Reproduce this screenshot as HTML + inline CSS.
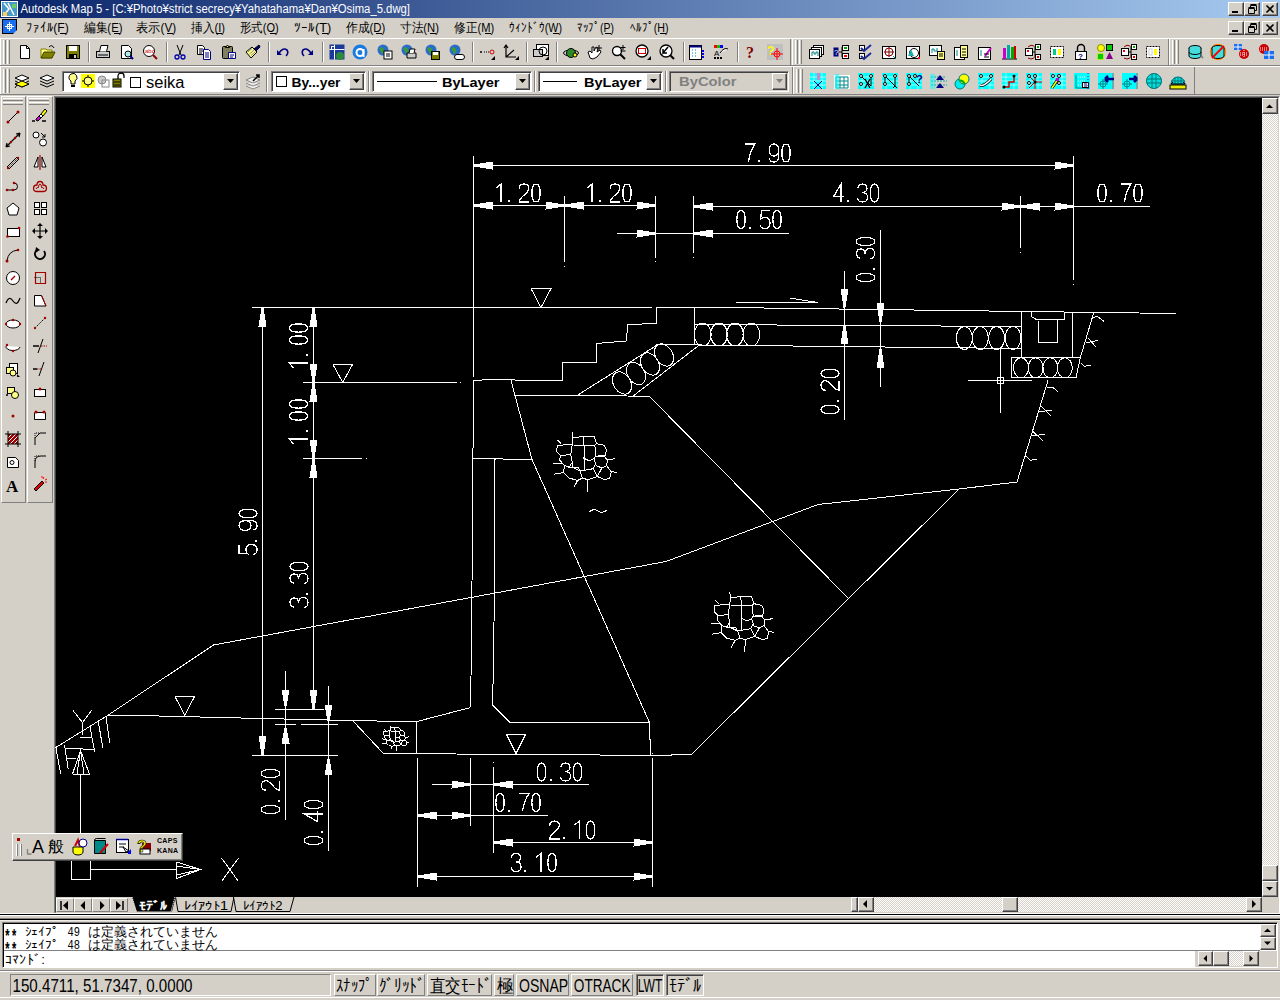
<!DOCTYPE html><html><head><meta charset="utf-8"><style>
*{box-sizing:border-box;margin:0;padding:0}
html,body{width:1280px;height:1000px;overflow:hidden;background:#D4D0C8;font-family:"Liberation Sans",sans-serif;font-size:12px;color:#000}
.a{position:absolute}
.btn{position:absolute;background:#D4D0C8;border-top:1px solid #fff;border-left:1px solid #fff;border-right:1px solid #404040;border-bottom:1px solid #404040;box-shadow:inset -1px -1px 0 #808080}
.m{position:absolute;top:19px;font-size:12px;white-space:nowrap;line-height:16px}
.tb{position:absolute;border-top:1px solid #fff;border-left:1px solid #fff;border-right:1px solid #808080;border-bottom:1px solid #808080}
.grip{position:absolute;width:3px;border-left:1px solid #fff;border-right:1px solid #808080;background:#D4D0C8}
.sep{position:absolute;width:2px;border-left:1px solid #808080;border-right:1px solid #fff}
.combo{position:absolute;height:21px;background:#fff;border-top:1px solid #808080;border-left:1px solid #808080;border-right:1px solid #fff;border-bottom:1px solid #fff;box-shadow:inset 1px 1px 0 #404040}
.hatch{background:repeating-conic-gradient(#fff 0 25%,#D4D0C8 0 50%) 0 0/2px 2px}
svg{position:absolute;overflow:visible}
</style></head><body>
<div class="a" style="left:0;top:0;width:1280px;height:18px;background:linear-gradient(to right,#0A246A,#A6CAF0)"></div>
<svg style="left:1px;top:1px" width="17" height="16"><rect x="0.5" y="0.5" width="16" height="15" fill="#4a9ac8" stroke="#fff"/><path d="M3 2 L8 8 L3 14 M7 2 L13 14" stroke="#fff" stroke-width="1.5" fill="none"/><rect x="11" y="3" width="4" height="4" fill="#6c6"/><rect x="2" y="11" width="4" height="4" fill="#fc6"/></svg>
<div class="btn" style="left:1228px;top:2px;width:16px;height:14px"></div>
<div class="a" style="left:1232px;top:11px;width:6px;height:2px;background:#000"></div>
<div class="btn" style="left:1244px;top:2px;width:16px;height:14px"></div>
<svg style="left:1247px;top:4px" width="10" height="10"><path d="M3.5 1.5h6v5h-2 M3.5 1.5v2 M1.5 4.5h6v5h-6z M1.5 3.5h6 M3.5 0.5h6" stroke="#000" fill="none"/></svg>
<div class="btn" style="left:1262px;top:2px;width:16px;height:14px"></div>
<svg style="left:1265px;top:4px" width="10" height="10"><path d="M1.5 1.5 L8.5 8.5 M8.5 1.5 L1.5 8.5" stroke="#000" stroke-width="1.6" fill="none"/></svg>
<svg style="left:2px;top:19px" width="17" height="17"><rect x="0.5" y="0.5" width="14" height="14" fill="#1a6ff0" stroke="#000"/><path d="M3 7.5h9 M7.5 3v9" stroke="#fff"/><rect x="5.5" y="5.5" width="4" height="4" fill="none" stroke="#fff"/><path d="M11 15 L15 11 L15 15z" fill="#ccc"/></svg>
<div class="a" style="left:59.75px;top:33px;width:6px;height:1px;background:#000"></div>
<div class="a" style="left:113.5px;top:33px;width:6px;height:1px;background:#000"></div>
<div class="a" style="left:167.25px;top:33px;width:6px;height:1px;background:#000"></div>
<div class="a" style="left:216px;top:33px;width:6px;height:1px;background:#000"></div>
<div class="a" style="left:269.75px;top:33px;width:6px;height:1px;background:#000"></div>
<div class="a" style="left:322.25px;top:33px;width:6px;height:1px;background:#000"></div>
<div class="a" style="left:376.2px;top:33px;width:6px;height:1px;background:#000"></div>
<div class="a" style="left:429.9px;top:33px;width:6px;height:1px;background:#000"></div>
<div class="a" style="left:485.25px;top:33px;width:6px;height:1px;background:#000"></div>
<div class="a" style="left:553px;top:33px;width:6px;height:1px;background:#000"></div>
<div class="a" style="left:605px;top:33px;width:6px;height:1px;background:#000"></div>
<div class="a" style="left:659.5px;top:33px;width:6px;height:1px;background:#000"></div>
<div class="btn" style="left:1228px;top:21px;width:16px;height:14px"></div>
<div class="a" style="left:1232px;top:30px;width:6px;height:2px;background:#000"></div>
<div class="btn" style="left:1244px;top:21px;width:16px;height:14px"></div>
<svg style="left:1247px;top:23px" width="10" height="10"><path d="M3.5 1.5h6v5h-2 M3.5 1.5v2 M1.5 4.5h6v5h-6z M1.5 3.5h6 M3.5 0.5h6" stroke="#000" fill="none"/></svg>
<div class="btn" style="left:1262px;top:21px;width:16px;height:14px"></div>
<svg style="left:1265px;top:23px" width="10" height="10"><path d="M1.5 1.5 L8.5 8.5 M8.5 1.5 L1.5 8.5" stroke="#000" stroke-width="1.6" fill="none"/></svg>
<div class="a" style="left:0;top:38px;width:1280px;height:1px;background:#fff"></div>
<div class="tb" style="left:0;top:39px;width:791px;height:26px;border-top:none;border-bottom:none"></div>
<div class="grip" style="left:3px;top:40px;height:24px"></div><div class="grip" style="left:7px;top:40px;height:24px"></div>
<svg style="left:17px;top:44px" width="16" height="16"><path d="M3.5 1.5h6l3 3v10h-9z" fill="#fff" stroke="#000"/><path d="M9.5 1.5v3h3" fill="none" stroke="#000"/></svg>
<svg style="left:40px;top:44px" width="16" height="16"><path d="M1 5h5l1 1h5v8H1z" fill="#ffff80" stroke="#808000"/><path d="M1 14 L4 8 H15 L12 14Z" fill="#808000" stroke="#404000"/><path d="M9 3 Q12 0 14 4" stroke="#000" fill="none"/></svg>
<svg style="left:65px;top:44px" width="16" height="16"><rect x="1.5" y="1.5" width="13" height="13" fill="#808000" stroke="#000"/><rect x="4" y="2" width="8" height="5" fill="#fff"/><rect x="4" y="10" width="8" height="4" fill="#000"/><rect x="9" y="11" width="2" height="3" fill="#ccc"/></svg>
<div class="sep" style="left:88px;top:42px;height:20px"></div>
<svg style="left:95px;top:44px" width="16" height="16"><rect x="1.5" y="7.5" width="13" height="6" fill="#ccc" stroke="#000"/><path d="M4.5 7.5 L6 1.5h7l-1.5 6" fill="#fff" stroke="#000"/><path d="M3 11h10" stroke="#000"/></svg>
<svg style="left:119px;top:44px" width="16" height="16"><path d="M2.5 1.5h7l3 3v10h-10z" fill="#fff" stroke="#000"/><circle cx="9" cy="10" r="3" fill="#aee" stroke="#000"/><path d="M11 12 L14 15" stroke="#008" stroke-width="2"/></svg>
<svg style="left:142px;top:44px" width="16" height="16"><circle cx="7" cy="7" r="5.5" fill="#fff" stroke="#000"/><text x="3" y="9" font-size="6" fill="#c00" font-family="Liberation Sans">abc</text><path d="M11 11 L15 15" stroke="#800" stroke-width="2"/></svg>
<div class="sep" style="left:166px;top:42px;height:20px"></div>
<svg style="left:172px;top:44px" width="16" height="16"><path d="M5 1 L9 11 M11 1 L7 11" stroke="#000"/><circle cx="5" cy="13" r="2" fill="none" stroke="#00a" stroke-width="1.3"/><circle cx="11" cy="13" r="2" fill="none" stroke="#00a" stroke-width="1.3"/></svg>
<svg style="left:196px;top:44px" width="16" height="16"><path d="M1.5 1.5h5l2 2v7h-7z" fill="#fff" stroke="#000"/><path d="M3 5h4M3 7h4M3 9h3" stroke="#000"/><path d="M7.5 5.5h5l2 2v8h-7z" fill="#fff" stroke="#000080"/><path d="M9 9h4M9 11h4M9 13h4" stroke="#000080"/></svg>
<svg style="left:221px;top:44px" width="16" height="16"><rect x="1.5" y="2.5" width="10" height="12" rx="1" fill="#808060" stroke="#000"/><path d="M4.5 3.5 L6.5 1 L8.5 3.5Z" fill="#ff0" stroke="#000"/><path d="M7.5 8.5h7v6h-7z" fill="#fff" stroke="#000080"/><path d="M9 11h4M9 13h3" stroke="#000080"/></svg>
<svg style="left:245px;top:44px" width="16" height="16"><path d="M1 8 L7 3 L12 8 L6 14Z" fill="#ff8" stroke="#000"/><path d="M3 8 L7 4.5 M4.5 10 L9 6 M6 11.5 L10.5 7.5" stroke="#888"/><path d="M9 5 L14 1 L15 3 L11 7" fill="#000080" stroke="#000"/></svg>
<div class="sep" style="left:268px;top:42px;height:20px"></div>
<svg style="left:275px;top:44px" width="16" height="16"><path d="M2 6 L2 11 L7 11Z" fill="#000080"/><path d="M4 9 Q8 3 12 6 Q14 9 11 12" fill="none" stroke="#000080" stroke-width="1.6"/></svg>
<svg style="left:299px;top:44px" width="16" height="16"><path d="M14 6 L14 11 L9 11Z" fill="#000080"/><path d="M12 9 Q8 3 4 6 Q2 9 5 12" fill="none" stroke="#000080" stroke-width="1.6"/></svg>
<div class="sep" style="left:322px;top:42px;height:20px"></div>
<svg style="left:329px;top:44px" width="16" height="16"><rect x="0.5" y="0.5" width="15" height="15" fill="#1a3a9a"/><path d="M5.5 0.5v15 M0.5 5.5h15" stroke="#fff"/><rect x="2.5" y="2.5" width="3" height="3" fill="none" stroke="#fff"/><circle cx="11" cy="12" r="4" fill="#2a8a3a"/></svg>
<svg style="left:352px;top:44px" width="16" height="16"><circle cx="8" cy="8" r="7.5" fill="#1a7ae0"/><circle cx="8" cy="8.5" r="3.5" fill="none" stroke="#fff" stroke-width="2"/><path d="M11.5 5v8" stroke="#fff" stroke-width="2"/></svg>
<svg style="left:377px;top:44px" width="16" height="16"><circle cx="6" cy="6" r="5.5" fill="#2a6ad0"/><path d="M2 4 Q5 2 7 5 Q9 8 5 10 Z M7 1 Q10 3 11 6" fill="#3a9a3a"/><rect x="7" y="7" width="8" height="8" fill="#fff" stroke="#000"/><path d="M9 10h4M9 12h4" stroke="#000"/></svg>
<svg style="left:401px;top:44px" width="16" height="16"><circle cx="6" cy="6" r="5.5" fill="#2a6ad0"/><path d="M2 4 Q5 2 7 5 Q9 8 5 10 Z M7 1 Q10 3 11 6" fill="#3a9a3a"/><path d="M6 9h9v5H6z" fill="#ccc" stroke="#000"/><path d="M8 9 L9 5h5l-1 4" fill="#fff" stroke="#000"/></svg>
<svg style="left:425px;top:44px" width="16" height="16"><circle cx="6" cy="6" r="5.5" fill="#2a6ad0"/><path d="M2 4 Q5 2 7 5 Q9 8 5 10 Z M7 1 Q10 3 11 6" fill="#3a9a3a"/><rect x="6.5" y="7.5" width="8" height="8" fill="#808000" stroke="#000"/><rect x="8" y="8" width="5" height="3" fill="#fff"/></svg>
<svg style="left:449px;top:44px" width="16" height="16"><circle cx="6" cy="6" r="5.5" fill="#2a6ad0"/><path d="M2 4 Q5 2 7 5 Q9 8 5 10 Z M7 1 Q10 3 11 6" fill="#3a9a3a"/><rect x="5.5" y="10.5" width="10" height="5" rx="2.5" fill="#fff" stroke="#000"/></svg>
<div class="sep" style="left:472px;top:42px;height:20px"></div>
<svg style="left:479px;top:44px" width="16" height="16"><path d="M1 8h2M2 7v2" stroke="#000"/><path d="M5 8h6" stroke="#000" stroke-dasharray="1 1"/><circle cx="13" cy="8" r="2" fill="none" stroke="#c00"/><path d="M12 16 L16 12 V16Z" fill="#000"/></svg>
<svg style="left:503px;top:44px" width="16" height="16"><path d="M3 2 V13 H13 M3 13 L11 6 M1 4 L3 1 L5 4" stroke="#000" fill="none" stroke-width="1.2"/><path d="M12 16 L16 12 V16Z" fill="#000"/></svg>
<div class="sep" style="left:526px;top:42px;height:20px"></div>
<svg style="left:533px;top:44px" width="16" height="16"><rect x="3.5" y="0.5" width="12" height="11" fill="#fff" stroke="#000"/><rect x="0.5" y="5.5" width="9" height="7" fill="#ccc" stroke="#000"/><circle cx="10" cy="7" r="4" fill="none" stroke="#000"/><path d="M12 16 L16 12 V16Z" fill="#000"/></svg>
<div class="sep" style="left:556px;top:42px;height:20px"></div>
<svg style="left:563px;top:44px" width="16" height="16"><ellipse cx="8" cy="9" rx="7.5" ry="3" fill="none" stroke="#000"/><circle cx="8" cy="9" r="4.5" fill="#2a8a2a" stroke="#000"/><circle cx="12" cy="11" r="2" fill="#ff0" stroke="#000"/></svg>
<svg style="left:587px;top:44px" width="16" height="16"><path d="M3 14 L1 8 L3 7 L5 9 L5 3 L7 3 L7 7 L9 3 L11 4 L10 8 L13 6 L14 8 L10 13 L6 15Z" fill="#fff" stroke="#000"/><path d="M12 1v6M9 4h6" stroke="#000"/></svg>
<svg style="left:611px;top:44px" width="16" height="16"><circle cx="6" cy="7" r="4.5" fill="#fff" stroke="#000" stroke-width="1.3"/><path d="M9 10 L14 15" stroke="#000" stroke-width="2"/><path d="M12 1v5M9.5 3.5h5M9.5 7h5" stroke="#000"/></svg>
<svg style="left:635px;top:44px" width="16" height="16"><circle cx="7" cy="7" r="6" fill="#fff" stroke="#000" stroke-width="1.3"/><rect x="3.5" y="4.5" width="7" height="5" fill="none" stroke="#c00"/><path d="M12 16 L16 12 V16Z" fill="#000"/></svg>
<svg style="left:659px;top:44px" width="16" height="16"><circle cx="7" cy="7" r="6" fill="#fff" stroke="#000" stroke-width="1.3"/><path d="M9 3 L4 9 L4 5 M4 9 L8 9" stroke="#000" stroke-width="1.5" fill="none"/><path d="M11 11 L15 15" stroke="#000" stroke-width="2"/></svg>
<div class="sep" style="left:683px;top:42px;height:20px"></div>
<svg style="left:689px;top:44px" width="16" height="16"><rect x="0.5" y="1.5" width="12" height="14" fill="#fff" stroke="#000"/><rect x="0.5" y="1.5" width="12" height="2" fill="#000080"/><path d="M3 6h1M6 6h1M3 9h1M6 9h1M3 12h1M6 12h1" stroke="#08a"/><path d="M14 6v8" stroke="#00f" stroke-width="2" stroke-dasharray="2 1"/></svg>
<svg style="left:713px;top:44px" width="16" height="16"><rect x="1" y="1" width="3" height="3" fill="#f00"/><rect x="4" y="1" width="3" height="3" fill="#0c0"/><rect x="7" y="1" width="3" height="3" fill="#00f"/><text x="1" y="12" font-size="8" font-family="Liberation Sans">A</text><path d="M7 9 Q11 3 15 5" stroke="#000" fill="#fff"/><path d="M1 14h8" stroke="#000" stroke-width="2" stroke-dasharray="2 1"/></svg>
<div class="sep" style="left:737px;top:42px;height:20px"></div>
<svg style="left:743px;top:44px" width="16" height="16"><text x="3" y="14" font-size="16" font-weight="bold" fill="#800000" font-family="Liberation Serif">?</text></svg>
<svg style="left:767px;top:44px" width="16" height="16"><rect x="0" y="0" width="16" height="16" fill="#c0c0c0"/><text x="0" y="11" font-size="12" font-weight="bold" fill="#ff0" font-family="Liberation Sans">?</text><circle cx="10" cy="10" r="3" fill="none" stroke="#f00"/><path d="M10 4v12M4 10h12" stroke="#f00"/></svg>
<div class="tb" style="left:792px;top:39px;width:377px;height:26px;border-top:none;border-bottom:none"></div>
<div class="grip" style="left:795px;top:40px;height:24px"></div><div class="grip" style="left:799px;top:40px;height:24px"></div>
<svg style="left:809px;top:44px" width="16" height="16"><rect x="4.5" y="1.5" width="10" height="9" fill="#fff" stroke="#000"/><rect x="2.5" y="3.5" width="10" height="9" fill="#fff" stroke="#000"/><rect x="0.5" y="5.5" width="10" height="9" fill="#fff" stroke="#000"/><path d="M3 12 V8h2v2h2V8h2v4" stroke="#088" fill="none"/></svg>
<svg style="left:833px;top:44px" width="16" height="16"><rect x="0.5" y="3.5" width="5" height="9" fill="#000080"/><text x="1" y="11" font-size="8" fill="#fff" font-family="Liberation Sans">?</text><path d="M6 8h3M9 3v10" stroke="#000"/><rect x="9.5" y="1.5" width="6" height="5" fill="#fff" stroke="#000"/><rect x="11" y="3" width="3" height="2" fill="#0a0"/><rect x="9.5" y="9.5" width="6" height="5" fill="#fff" stroke="#000"/><rect x="11" y="11" width="3" height="2" fill="#f00"/></svg>
<svg style="left:857px;top:44px" width="16" height="16"><rect x="2.5" y="1.5" width="5" height="5" fill="#fff" stroke="#000"/><rect x="2.5" y="9.5" width="5" height="5" fill="#fff" stroke="#000"/><path d="M4 4 L7 7 L14 1 M4 12 L7 15 L14 9" stroke="#1a2a9a" stroke-width="2" fill="none"/></svg>
<svg style="left:881px;top:44px" width="16" height="16"><rect x="1.5" y="2.5" width="13" height="12" fill="#fff" stroke="#000"/><circle cx="8" cy="8" r="4" fill="none" stroke="#800"/><path d="M8 3v10M3 8h10" stroke="#800"/><path d="M12 12 L15 15" stroke="#088"/></svg>
<svg style="left:905px;top:44px" width="16" height="16"><rect x="1.5" y="2.5" width="13" height="12" fill="#fff" stroke="#000"/><circle cx="9" cy="9" r="4.5" fill="none" stroke="#000"/><path d="M3 12 L6 5 L9 12Z" fill="#2aa"/><rect x="13" y="13" width="2" height="2" fill="#f00"/></svg>
<svg style="left:929px;top:44px" width="16" height="16"><rect x="0.5" y="1.5" width="12" height="10" fill="#fff" stroke="#000"/><path d="M3 9V5h2v2h3V4" stroke="#088" fill="none"/><rect x="8.5" y="7.5" width="7" height="8" fill="#ff8" stroke="#000"/><path d="M10 10h4M10 12h4" stroke="#000"/></svg>
<svg style="left:953px;top:44px" width="16" height="16"><rect x="1.5" y="3.5" width="10" height="12" fill="#fff" stroke="#000"/><path d="M4 12V6" stroke="#088"/><rect x="7.5" y="1.5" width="7" height="12" fill="#ff8" stroke="#000"/><path d="M9 5h4M9 8h4M9 11h4" stroke="#000"/></svg>
<svg style="left:977px;top:44px" width="16" height="16"><rect x="1.5" y="3.5" width="12" height="12" fill="#fff" stroke="#000"/><path d="M4 12V6" stroke="#088"/><path d="M8 12 L14 4" stroke="#c0c" stroke-width="2"/><path d="M7 10h5M7 13h5" stroke="#000"/></svg>
<svg style="left:1001px;top:44px" width="16" height="16"><path d="M1 15h15" stroke="#000"/><rect x="2" y="4" width="3" height="11" fill="#c0c"/><rect x="6" y="1" width="3" height="14" fill="#0aa"/><rect x="10" y="3" width="3" height="12" fill="#0a0"/><rect x="13" y="2" width="2" height="13" fill="#c00"/></svg>
<svg style="left:1025px;top:44px" width="16" height="16"><rect x="0.5" y="4.5" width="7" height="7" fill="#fff" stroke="#000"/><rect x="2" y="6" width="2" height="2" fill="#f00"/><path d="M8 8h2M10 2v12" stroke="#000"/><rect x="10.5" y="0.5" width="5" height="5" fill="#fff" stroke="#000"/><rect x="10.5" y="10.5" width="5" height="5" fill="#fff" stroke="#000"/><rect x="12" y="2" width="2" height="2" fill="#0a0"/><rect x="12" y="12" width="2" height="2" fill="#f00"/><path d="M3 3 Q6 0 9 2 M3 14 Q6 16 9 14" stroke="#800" fill="none"/></svg>
<svg style="left:1049px;top:44px" width="16" height="16"><rect x="1.5" y="2.5" width="13" height="11" fill="#fff" stroke="#000" stroke-dasharray="2 1"/><rect x="4" y="5" width="3" height="6" fill="#0c8"/><rect x="9" y="5" width="3" height="6" fill="#ff0"/></svg>
<svg style="left:1073px;top:44px" width="16" height="16"><path d="M4.5 7V4 a3.5 3.5 0 0 1 7 0V7" fill="none" stroke="#000" stroke-width="1.4"/><rect x="2.5" y="7.5" width="11" height="8" fill="#fff" stroke="#000"/><text x="5" y="15" font-size="8" font-weight="bold" fill="#000080" font-family="Liberation Sans">?</text></svg>
<svg style="left:1097px;top:44px" width="16" height="16"><circle cx="4" cy="4" r="3.5" fill="#ff0" stroke="#880"/><rect x="9.5" y="0.5" width="6" height="6" fill="#0c0" stroke="#000"/><rect x="0.5" y="9.5" width="6" height="6" fill="#0c0" stroke="#ff0" stroke-dasharray="1 1"/><path d="M9 15 L12.5 8 L16 15Z" fill="#808"/></svg>
<svg style="left:1121px;top:44px" width="16" height="16"><rect x="0.5" y="4.5" width="7" height="7" fill="#fff" stroke="#000"/><rect x="2" y="6" width="2" height="2" fill="#f00"/><path d="M8 8h2M10 2v12" stroke="#000"/><rect x="10.5" y="0.5" width="5" height="5" fill="#fff" stroke="#000"/><rect x="10.5" y="10.5" width="5" height="5" fill="#fff" stroke="#000"/><rect x="12" y="2" width="2" height="2" fill="#0a0"/><rect x="12" y="12" width="2" height="2" fill="#f00"/><path d="M3 3 Q6 0 9 2 M3 14 Q6 16 9 14" stroke="#800" fill="none"/></svg>
<svg style="left:1145px;top:44px" width="16" height="16"><rect x="1.5" y="2.5" width="13" height="11" fill="#fff" stroke="#000" stroke-dasharray="2 1"/><rect x="4" y="5" width="3" height="6" fill="#fff" stroke="#ccc"/><rect x="9" y="5" width="3" height="6" fill="#ff0"/></svg>
<div class="tb" style="left:1169px;top:39px;width:111px;height:26px;border-right:none;border-top:none;border-bottom:none"></div>
<div class="grip" style="left:1172px;top:40px;height:24px"></div><div class="grip" style="left:1176px;top:40px;height:24px"></div>
<svg style="left:1187px;top:44px" width="16" height="16"><ellipse cx="8" cy="4" rx="6" ry="2.5" fill="#4dd" stroke="#000"/><path d="M2 4v8 a6 2.5 0 0 0 12 0V4" fill="#4dd" stroke="#000"/><path d="M2 8 a6 2.5 0 0 0 12 0" fill="none" stroke="#000"/><path d="M14 12 l2 2" stroke="#888" stroke-width="2"/></svg>
<svg style="left:1210px;top:44px" width="16" height="16"><ellipse cx="8" cy="8" rx="7.5" ry="7.5" fill="#fff" stroke="#f80" stroke-width="1.5"/><ellipse cx="8" cy="4" rx="6" ry="2.5" fill="#4dd" stroke="#000"/><path d="M2 4v8 a6 2.5 0 0 0 12 0V4" fill="#4dd" stroke="#000"/><path d="M2 14 L14 2" stroke="#f00" stroke-width="1.8"/></svg>
<svg style="left:1234px;top:44px" width="16" height="16"><rect x="0" y="0" width="8" height="6" fill="#1a6ff0"/><path d="M4 0v6M0 3h8" stroke="#fff"/><circle cx="10" cy="10" r="5" fill="#c00"/><path d="M6 9h8M6 11h8M10 6v8" stroke="#fff" stroke-dasharray="1 1"/></svg>
<svg style="left:1258px;top:44px" width="16" height="16"><circle cx="6" cy="5" r="5" fill="#c00"/><path d="M2 4h8M2 6h8" stroke="#fff" stroke-dasharray="1 1"/><rect x="6" y="7" width="10" height="8" fill="#1a6ff0"/><path d="M11 7v8M6 11h10" stroke="#fff"/></svg>
<div class="a" style="left:0;top:65px;width:1280px;height:1px;background:#808080"></div>
<div class="a" style="left:0;top:66px;width:1280px;height:1px;background:#fff"></div>
<div class="tb" style="left:0;top:67px;width:793px;height:27px;border-top:none;border-bottom:none"></div>
<div class="grip" style="left:3px;top:69px;height:24px"></div><div class="grip" style="left:7px;top:69px;height:24px"></div>
<svg style="left:14px;top:73px" width="16" height="16"><path d="M1 5 L8 2 L15 5 L8 8Z M1 8 L8 11 L15 8 M1 11 L8 14 L15 11" fill="#fff" stroke="#000"/><path d="M1 11 L8 14 L15 11 L8 8Z" fill="#ff0" stroke="#000"/><path d="M1 15 L3 12" stroke="#000"/></svg>
<svg style="left:39px;top:73px" width="16" height="16"><path d="M1 5 L8 2 L15 5 L8 8Z" fill="#fff" stroke="#000"/><path d="M1 8 L8 11 L15 8 M1 11 L8 14 L15 11" fill="none" stroke="#000"/></svg>
<div class="combo" style="left:62px;top:71px;width:178px;background:#fff"></div>
<div class="btn" style="left:223px;top:73px;width:15px;height:17px"></div>
<svg style="left:227px;top:79px" width="8" height="5"><path d="M0 0h7L3.5 4Z" fill="#000"/></svg>
<svg style="left:66px;top:73px" width="16" height="16"><path d="M5 1 a4 4 0 0 1 4 7 v3 h-4 v-3 a4 4 0 0 1 0 -7" fill="#ff8" stroke="#000"/><path d="M5 12h4v2h-4z" fill="#000"/></svg>
<svg style="left:81px;top:74px" width="16" height="16"><rect x="0" y="0" width="14" height="14" fill="#ff0"/><circle cx="7" cy="7" r="4" fill="#ff8" stroke="#000"/><path d="M7 1v2M7 11v2M1 7h2M11 7h2" stroke="#000"/></svg>
<svg style="left:96px;top:74px" width="16" height="16"><circle cx="6" cy="6" r="4" fill="#ccc" stroke="#888"/><rect x="6" y="6" width="7" height="7" fill="none" stroke="#888"/></svg>
<svg style="left:113px;top:73px" width="16" height="16"><rect x="0" y="6" width="8" height="8" fill="#808000" stroke="#000"/><path d="M5 6V3 a3 3 0 0 1 6 0v2" fill="none" stroke="#000" stroke-width="1.3"/><path d="M1 9h6M1 12h6" stroke="#000"/></svg>
<div class="a" style="left:130px;top:77px;width:11px;height:11px;border:1px solid #000;background:#fff"></div>
<svg style="left:245px;top:73px" width="16" height="16"><path d="M1 7 L8 4 L15 7 L8 10Z M1 10 L8 13 L15 10 M1 13 L8 16 L15 13" fill="#eee" stroke="#888"/><path d="M8 8 L14 2 M11 2h3v3" stroke="#000" stroke-width="1.5" fill="none"/></svg>
<div class="sep" style="left:266px;top:71px;height:21px"></div>
<div class="combo" style="left:271px;top:71px;width:95px;background:#fff"></div>
<div class="btn" style="left:349px;top:73px;width:15px;height:17px"></div>
<svg style="left:353px;top:79px" width="8" height="5"><path d="M0 0h7L3.5 4Z" fill="#000"/></svg>
<div class="a" style="left:276px;top:76px;width:11px;height:11px;border:1px solid #000;background:#fff"></div>
<div class="sep" style="left:368px;top:71px;height:21px"></div>
<div class="combo" style="left:372px;top:71px;width:160px;background:#fff"></div>
<div class="btn" style="left:515px;top:73px;width:15px;height:17px"></div>
<svg style="left:519px;top:79px" width="8" height="5"><path d="M0 0h7L3.5 4Z" fill="#000"/></svg>
<div class="a" style="left:377px;top:81px;width:60px;height:1px;background:#000"></div>
<div class="sep" style="left:534px;top:71px;height:21px"></div>
<div class="combo" style="left:538px;top:71px;width:125px;background:#fff"></div>
<div class="btn" style="left:646px;top:73px;width:15px;height:17px"></div>
<svg style="left:650px;top:79px" width="8" height="5"><path d="M0 0h7L3.5 4Z" fill="#000"/></svg>
<div class="a" style="left:543px;top:81px;width:34px;height:1px;background:#000"></div>
<div class="sep" style="left:665px;top:71px;height:21px"></div>
<div class="combo" style="left:669px;top:71px;width:120px;background:#D4D0C8"></div>
<div class="btn" style="left:772px;top:73px;width:15px;height:17px"></div>
<svg style="left:776px;top:79px" width="8" height="5"><path d="M0 0h7L3.5 4Z" fill="#808080"/></svg>
<div class="tb" style="left:793px;top:67px;width:402px;height:27px;border-top:none;border-bottom:none"></div>
<div class="grip" style="left:796px;top:69px;height:24px"></div><div class="grip" style="left:800px;top:69px;height:24px"></div>
<svg style="left:810px;top:73px" width="16" height="16"><rect x="0" y="0" width="16" height="16" fill="#00ffff"/><path d="M0 4h16M0 8h16M0 12h16M4 0v16M12 0v16" stroke="#fff" stroke-width="0.6"/><path d="M4 16 L12 8 M12 16 L4 8" stroke="#008" /><rect x="7" y="0" width="3" height="7" fill="#c8c"/></svg>
<svg style="left:834px;top:73px" width="16" height="16"><rect x="0" y="2" width="16" height="14" fill="#fff"/><path d="M2 4h12v11H2z M2 8h12M2 12h12M6 4v11M10 4v11" stroke="#088" fill="none"/><rect x="1" y="1" width="4" height="15" fill="#0ff" opacity=".6"/></svg>
<svg style="left:858px;top:73px" width="16" height="16"><rect x="0" y="0" width="16" height="16" fill="#00ffff"/><path d="M0 4h16M0 8h16M0 12h16M4 0v16M12 0v16" stroke="#fff" stroke-width="0.6"/><path d="M3 3 L13 13 M13 3v10" stroke="#000"/><circle cx="3" cy="3" r="1.5" fill="#fff" stroke="#000"/><circle cx="13" cy="3" r="1.5" fill="#fff" stroke="#000"/><circle cx="3" cy="11" r="1.5" fill="#fff" stroke="#000"/><path d="M7 6 L12 15 M12 6 L7 15" stroke="#000" stroke-width="1.3"/></svg>
<svg style="left:882px;top:73px" width="16" height="16"><rect x="0" y="0" width="16" height="16" fill="#00ffff"/><path d="M0 4h16M0 8h16M0 12h16M4 0v16M12 0v16" stroke="#fff" stroke-width="0.6"/><path d="M3 3 L13 13 M13 3v10 M3 3v8" stroke="#000"/><circle cx="3" cy="3" r="1.5" fill="#fff" stroke="#000"/><circle cx="13" cy="3" r="1.5" fill="#fff" stroke="#000"/><circle cx="3" cy="11" r="1.5" fill="#fff" stroke="#000"/><path d="M11 15 L13 13 L15 15" stroke="#000" fill="none"/></svg>
<svg style="left:906px;top:73px" width="16" height="16"><rect x="0" y="0" width="16" height="16" fill="#00ffff"/><path d="M0 4h16M0 8h16M0 12h16M4 0v16M12 0v16" stroke="#fff" stroke-width="0.6"/><path d="M3 3 L13 13 M3 3v8" stroke="#000"/><circle cx="3" cy="3" r="1.5" fill="#fff" stroke="#000"/><circle cx="9" cy="3" r="1.5" fill="#fff" stroke="#000"/><circle cx="3" cy="11" r="1.5" fill="#fff" stroke="#000"/><text x="10" y="10" font-size="11" font-weight="bold" fill="#000080" font-family="Liberation Sans">?</text></svg>
<svg style="left:930px;top:73px" width="16" height="16"><path d="M1 4 L16 4 M1 8h16M1 12h16" stroke="#0aa" stroke-dasharray="2 1"/><rect x="0" y="1" width="5" height="15" fill="#0ff" opacity=".5"/><path d="M6 7 L10 2 L14 7Z M6 15 L10 10 L14 15Z" fill="#000080"/></svg>
<svg style="left:954px;top:73px" width="16" height="16"><circle cx="6" cy="11" r="5" fill="#0ee" stroke="#077"/><circle cx="10" cy="6" r="5" fill="#ff0" stroke="#077"/><path d="M5.5 7.5 a5 5 0 0 1 5 3.5" stroke="#0a0" stroke-width="2" fill="none"/></svg>
<svg style="left:978px;top:73px" width="16" height="16"><rect x="0" y="0" width="16" height="16" fill="#00ffff"/><path d="M0 4h16M0 8h16M0 12h16M4 0v16M12 0v16" stroke="#fff" stroke-width="0.6"/><circle cx="3" cy="3" r="1.5" fill="#fff" stroke="#000"/><circle cx="13" cy="3" r="1.5" fill="#fff" stroke="#000"/><path d="M2 12 Q6 14 13 6" stroke="#000" stroke-width="3" fill="none"/><path d="M2 12 Q6 14 13 6" stroke="#fff" stroke-width="1.5" fill="none"/></svg>
<svg style="left:1002px;top:73px" width="16" height="16"><rect x="0" y="0" width="16" height="16" fill="#00ffff"/><path d="M0 4h16M0 8h16M0 12h16M4 0v16M12 0v16" stroke="#fff" stroke-width="0.6"/><path d="M2 14 H7 V9 H12 V3" stroke="#c00" stroke-width="1.5" fill="none"/><circle cx="2" cy="14" r="1.5" fill="#000"/><circle cx="12" cy="3" r="1.5" fill="#000"/></svg>
<svg style="left:1026px;top:73px" width="16" height="16"><rect x="0" y="0" width="16" height="16" fill="#00ffff"/><path d="M0 4h16M0 8h16M0 12h16M4 0v16M12 0v16" stroke="#fff" stroke-width="0.6"/><path d="M3 3 L9 9 M9 3v13 M9 9h7 M3 15 L9 9" stroke="#c00"/><circle cx="3" cy="3" r="1.5" fill="#fff" stroke="#000"/><circle cx="9" cy="3" r="1.5" fill="#fff" stroke="#000"/><circle cx="3" cy="10" r="1.5" fill="#fff" stroke="#000"/><circle cx="9" cy="9" r="1.5" fill="#000"/></svg>
<svg style="left:1050px;top:73px" width="16" height="16"><rect x="0" y="0" width="16" height="16" fill="#00ffff"/><path d="M0 4h16M0 8h16M0 12h16M4 0v16M12 0v16" stroke="#fff" stroke-width="0.6"/><circle cx="3" cy="3" r="1.5" fill="#fff" stroke="#000"/><circle cx="9" cy="3" r="1.5" fill="#fff" stroke="#000"/><circle cx="9" cy="10" r="1.5" fill="#fff" stroke="#000"/><path d="M2 15 L8 6" stroke="#000" stroke-width="3"/><path d="M2 15 L8 6" stroke="#ff0" stroke-width="1.5"/><rect x="6" y="5" width="3" height="3" fill="#c0c"/></svg>
<svg style="left:1074px;top:73px" width="16" height="16"><rect x="0" y="0" width="16" height="16" fill="#0ff"/><path d="M2 2v13h13" stroke="#088" fill="none"/><path d="M4 4h8M4 8h8M4 12h8" stroke="#fff" stroke-dasharray="1 1"/><rect x="8.5" y="9.5" width="6" height="5" fill="#fff" stroke="#000"/><path d="M10 11h3M10 13h3" stroke="#000080"/><path d="M14 0v16" stroke="#808" stroke-dasharray="1 2"/></svg>
<svg style="left:1098px;top:73px" width="16" height="16"><rect x="0" y="0" width="14" height="16" fill="#0ff"/><path d="M15 0v16" stroke="#088"/><circle cx="5" cy="11" r="3" fill="none" stroke="#088"/><path d="M5 6v10M0 11h10" stroke="#088"/><path d="M7 6h9 M7 6 L10 3 M7 6 L10 9" stroke="#000080" stroke-width="2.5"/></svg>
<svg style="left:1122px;top:73px" width="16" height="16"><rect x="0" y="0" width="14" height="16" fill="#0ff"/><path d="M15 0v16" stroke="#088"/><circle cx="5" cy="11" r="3" fill="none" stroke="#088"/><path d="M5 6v10M0 11h10" stroke="#088"/><path d="M7 6h8 M15 6 L12 3 M15 6 L12 9" stroke="#000080" stroke-width="2.5"/></svg>
<svg style="left:1146px;top:73px" width="16" height="16"><circle cx="8" cy="8" r="7.5" fill="#0dd" stroke="#077"/><path d="M0.5 6h15M0.5 10h15M6 0.5v15M10 0.5v15" stroke="#077"/></svg>
<svg style="left:1170px;top:73px" width="16" height="16"><path d="M1 11 a7 7 0 0 1 14 0Z" fill="#0dd" stroke="#077"/><path d="M1 8h14M8 4v7M5 4v7M11 4v7" stroke="#077"/><rect x="0" y="12" width="16" height="4" fill="#ee0" stroke="#000"/><path d="M1 11h14 M1 11l2 -2 M15 11l-2 -2" stroke="#000"/></svg>
<div class="a" style="left:0;top:94px;width:1280px;height:1px;background:#808080"></div>
<div class="tb" style="left:1px;top:96px;width:25px;height:407px"></div>
<div class="a" style="left:3px;top:98px;width:20px;height:3px;border-top:1px solid #fff;border-bottom:1px solid #808080"></div>
<div class="a" style="left:3px;top:102px;width:20px;height:3px;border-top:1px solid #fff;border-bottom:1px solid #808080"></div>
<div class="tb" style="left:27px;top:96px;width:26px;height:407px"></div>
<div class="a" style="left:29px;top:98px;width:20px;height:3px;border-top:1px solid #fff;border-bottom:1px solid #808080"></div>
<div class="a" style="left:29px;top:102px;width:20px;height:3px;border-top:1px solid #fff;border-bottom:1px solid #808080"></div>
<svg style="left:5px;top:109px" width="16" height="16"><path d="M3 13 L13 3" stroke="#000"/><circle cx="3" cy="13" r="1.5" fill="#a00000"/><circle cx="13" cy="3" r="1.5" fill="#a00000"/></svg>
<svg style="left:32px;top:108px" width="16" height="16"><path d="M9 6 L13 1 L15 3 L11 8Z" fill="#ff0" stroke="#000"/><path d="M7 8 L9 6 L11 8 L9 10Z" fill="#fff" stroke="#000"/><path d="M4 11 L7 8 L9 10 L6 13 Q5 13 4 12Z" fill="#c0c" stroke="#000"/><path d="M0 13h3M10 13h4" stroke="#000" stroke-width="1.6"/></svg>
<svg style="left:5px;top:132px" width="16" height="16"><path d="M1 15 L15 1 M1 15l1-4 M1 15l4-1 M15 1l-4 1 M15 1l-1 4" stroke="#000" stroke-width="1.2"/><circle cx="6" cy="10" r="1.2" fill="#a00000"/><circle cx="10" cy="6" r="1.2" fill="#a00000"/></svg>
<svg style="left:32px;top:131px" width="16" height="16"><circle cx="4" cy="4" r="3" fill="#fff" stroke="#000"/><circle cx="11" cy="11.5" r="3.5" fill="#fff" stroke="#000"/><path d="M9 2 L13 6 M13 3v3h-3" stroke="#000" fill="none"/></svg>
<svg style="left:5px;top:155px" width="16" height="16"><path d="M2 12 L12 2 M4 14 L14 4" stroke="#000"/><path d="M3 13 L13 3" stroke="#000" stroke-dasharray="1 1"/><circle cx="3" cy="13" r="1.2" fill="#a00000"/><circle cx="13" cy="3" r="1.2" fill="#a00000"/></svg>
<svg style="left:32px;top:154px" width="16" height="16"><path d="M2 13 L6 3 V13Z M14 13 L10 3 V13Z" fill="#fff" stroke="#000"/><path d="M8 1v15" stroke="#a00000" stroke-width="1.2"/></svg>
<svg style="left:5px;top:178px" width="16" height="16"><path d="M2 12 H9 a3.5 3.5 0 0 0 0 -7" stroke="#000" fill="none"/><circle cx="2" cy="12" r="1.3" fill="#a00000"/><circle cx="8" cy="12" r="1.3" fill="#a00000"/><circle cx="9" cy="5" r="1.3" fill="#a00000"/></svg>
<svg style="left:32px;top:177px" width="16" height="16"><path d="M1.5 11.5 Q1.5 8 5 8 Q5 4.5 8 4.5 Q11 4.5 11 8 Q14.5 8 14.5 11.5 Q14.5 14.5 11 14.5 H5 Q1.5 14.5 1.5 11.5Z" fill="none" stroke="#a00000" stroke-width="1.3"/><path d="M4 12 Q4 10.5 6.5 10.5 Q6.5 7 8 7 Q9.5 7 9.5 10.5 Q12 10.5 12 12" fill="none" stroke="#a00000"/></svg>
<svg style="left:5px;top:201px" width="16" height="16"><path d="M8 2 L14 7 L12 14 H4 L2 7Z" fill="#fff" stroke="#000"/></svg>
<svg style="left:32px;top:200px" width="16" height="16"><rect x="2.5" y="2.5" width="5" height="5" fill="#fff" stroke="#000"/><rect x="9.5" y="2.5" width="5" height="5" fill="#fff" stroke="#000"/><rect x="2.5" y="9.5" width="5" height="5" fill="#fff" stroke="#000"/><rect x="9.5" y="9.5" width="5" height="5" fill="#fff" stroke="#000"/></svg>
<svg style="left:5px;top:224px" width="16" height="16"><rect x="2.5" y="4.5" width="12" height="8" fill="#fff" stroke="#000"/><circle cx="2.5" cy="12.5" r="1.3" fill="#a00000"/><circle cx="14" cy="4" r="1.3" fill="#a00000"/></svg>
<svg style="left:32px;top:223px" width="16" height="16"><path d="M8 2v12M2 8h12" stroke="#000" stroke-width="1.2"/><path d="M8 0l-3 3h6z M8 16l-3-3h6z M0 8l3-3v6z M16 8l-3-3v6z" fill="#000"/></svg>
<svg style="left:5px;top:247px" width="16" height="16"><path d="M2 14 Q3 4 13 3" stroke="#000" fill="none"/><circle cx="2" cy="14" r="1.5" fill="#a00000"/><circle cx="13" cy="3" r="1.3" fill="#a00000"/></svg>
<svg style="left:32px;top:246px" width="16" height="16"><path d="M12 5 A5 5 0 1 1 5 4" fill="none" stroke="#000" stroke-width="2"/><path d="M4 1 L8 4 L3 7Z" fill="#000"/></svg>
<svg style="left:5px;top:270px" width="16" height="16"><circle cx="8" cy="8" r="6.5" fill="#fff" stroke="#000"/><path d="M6 10 L10 6" stroke="#a00000" stroke-width="1.5"/></svg>
<svg style="left:32px;top:269px" width="16" height="16"><path d="M3.5 3.5h10v11h-10z" fill="none" stroke="#a00000" stroke-width="1.2"/><path d="M2.5 8.5h6v6" fill="none" stroke="#000" stroke-dasharray="1 1"/></svg>
<svg style="left:5px;top:293px" width="16" height="16"><path d="M1 10 Q4 2 8 8 Q12 14 15 5" stroke="#000" fill="none" stroke-width="1.2"/></svg>
<svg style="left:32px;top:292px" width="16" height="16"><path d="M2.5 3.5h7 L14 14 H2.5z" fill="#fff" stroke="#000"/><path d="M9.5 3.5 L14 14" stroke="#a00000"/></svg>
<svg style="left:5px;top:316px" width="16" height="16"><ellipse cx="8" cy="8" rx="7" ry="4" fill="#fff" stroke="#000"/><circle cx="8" cy="4" r="1.2" fill="#a00000"/><circle cx="1" cy="8" r="1.2" fill="#a00000"/><circle cx="15" cy="8" r="1.2" fill="#a00000"/></svg>
<svg style="left:32px;top:315px" width="16" height="16"><path d="M3 13 L13 3" stroke="#000" stroke-dasharray="1.5 1"/><circle cx="3" cy="13" r="1.2" fill="#a00000"/><circle cx="13" cy="3" r="1.2" fill="#a00000"/></svg>
<svg style="left:5px;top:339px" width="16" height="16"><path d="M1 7 a7 4 0 1 0 14 1" fill="#fff" stroke="#000"/><circle cx="2" cy="6" r="1.2" fill="#a00000"/><circle cx="8" cy="12" r="1.2" fill="#a00000"/></svg>
<svg style="left:32px;top:338px" width="16" height="16"><path d="M6 15 L11 1" stroke="#000"/><path d="M1 8h6" stroke="#000" stroke-width="1.5"/><path d="M9 8h6" stroke="#a00000" stroke-dasharray="1.5 1"/></svg>
<svg style="left:5px;top:362px" width="16" height="16"><rect x="4.5" y="1.5" width="8" height="10" fill="#fff" stroke="#000"/><rect x="1.5" y="5.5" width="7" height="6" fill="#ff8" stroke="#000"/><circle cx="8" cy="11" r="3" fill="#ff8" stroke="#000"/><path d="M12 12l3 3h-3z" fill="#000"/></svg>
<svg style="left:32px;top:361px" width="16" height="16"><path d="M7 15 L12 1" stroke="#000"/><path d="M1 8h4" stroke="#000" stroke-width="1.5"/><path d="M5 8h5" stroke="#a00000" stroke-dasharray="1.5 1"/></svg>
<svg style="left:5px;top:385px" width="16" height="16"><rect x="2.5" y="2.5" width="7" height="6" fill="#ff8" stroke="#000"/><circle cx="10" cy="10" r="3.5" fill="#ff8" stroke="#000"/><circle cx="2" cy="10" r="1" fill="#000"/></svg>
<svg style="left:32px;top:384px" width="16" height="16"><rect x="2.5" y="5.5" width="11" height="7" fill="#fff" stroke="#000"/><circle cx="8" cy="5" r="1.5" fill="#a00000"/></svg>
<svg style="left:5px;top:408px" width="16" height="16"><circle cx="8" cy="8" r="1.5" fill="#a00000"/></svg>
<svg style="left:32px;top:407px" width="16" height="16"><path d="M2.5 5.5v7h11v-7 M5 5.5h6" fill="#fff" stroke="#000"/><circle cx="4" cy="5" r="1.5" fill="#a00000"/><circle cx="12" cy="5" r="1.5" fill="#a00000"/></svg>
<svg style="left:5px;top:431px" width="16" height="16"><rect x="3" y="3" width="10" height="10" fill="#a00000"/><path d="M3 7 L7 3 M3 11 L11 3 M5 13 L13 5 M9 13 L13 9" stroke="#fff"/><path d="M0 3h16M0 13h16M3 0v16M13 0v16" stroke="#000"/></svg>
<svg style="left:32px;top:430px" width="16" height="16"><path d="M3 15 V8 L8 3 H14" fill="none" stroke="#000"/><path d="M3 8 L3 3 H8" fill="none" stroke="#000" stroke-dasharray="1 1"/></svg>
<svg style="left:5px;top:454px" width="16" height="16"><path d="M2.5 3.5h8l3 3v7h-11z" fill="#fff" stroke="#000"/><circle cx="7" cy="8.5" r="2" fill="none" stroke="#000"/></svg>
<svg style="left:32px;top:453px" width="16" height="16"><path d="M3 15 V9 Q3 3 9 3 H14" fill="none" stroke="#000"/><path d="M3 8 L3 3 H8" fill="none" stroke="#000" stroke-dasharray="1 1"/></svg>
<svg style="left:5px;top:477px" width="16" height="16"><text x="1" y="15" font-size="17" font-family="Liberation Serif" font-weight="bold">A</text></svg>
<svg style="left:32px;top:476px" width="16" height="16"><path d="M2 13 L10 5 L12 7 L4 15Z" fill="#d00" stroke="#000"/><path d="M11 3l1-2M13 4l2-1M13 6l2 0M10 2l0-2" stroke="#f00"/></svg>
<div class="a" style="left:54px;top:96px;width:1226px;height:818px;border-top:1px solid #808080;border-left:1px solid #808080;border-right:1px solid #fff;border-bottom:1px solid #fff"></div>
<div class="a" style="left:55px;top:97px;width:1224px;height:816px;border-top:1px solid #404040;border-left:1px solid #404040;border-right:1px solid #D4D0C8;border-bottom:1px solid #D4D0C8"></div>
<div class="a" style="left:56px;top:98px;width:1206px;height:799px;background:#000"></div>
<div class="a hatch" style="left:1262px;top:98px;width:16px;height:799px"></div>
<div class="btn" style="left:1262px;top:98px;width:16px;height:16px"></div>
<svg style="left:1266px;top:103px" width="8" height="6"><path d="M0 5h7L3.5 1.5Z" fill="#000"/></svg>
<div class="btn" style="left:1262px;top:865px;width:16px;height:16px"></div>
<div class="btn" style="left:1262px;top:881px;width:16px;height:16px"></div>
<svg style="left:1266px;top:886px" width="8" height="6"><path d="M0 1h7L3.5 4.5Z" fill="#000"/></svg>
<div class="a" style="left:56px;top:897px;width:1222px;height:16px;background:#D4D0C8"></div>
<div class="a" style="left:56px;top:898px;width:18px;height:14px;border-top:1px solid #fff;border-left:1px solid #fff;border-right:1px solid #808080;border-bottom:1px solid #808080"></div>
<div class="a" style="left:74px;top:898px;width:18px;height:14px;border-top:1px solid #fff;border-left:1px solid #fff;border-right:1px solid #808080;border-bottom:1px solid #808080"></div>
<div class="a" style="left:92px;top:898px;width:18px;height:14px;border-top:1px solid #fff;border-left:1px solid #fff;border-right:1px solid #808080;border-bottom:1px solid #808080"></div>
<div class="a" style="left:110px;top:898px;width:18px;height:14px;border-top:1px solid #fff;border-left:1px solid #fff;border-right:1px solid #808080;border-bottom:1px solid #808080"></div>
<svg style="left:60px;top:901px" width="10" height="10"><path d="M1 0v9" stroke="#000" stroke-width="1.5"/><path d="M8 0v9L3 4.5Z" fill="#000"/></svg>
<svg style="left:79px;top:901px" width="10" height="10"><path d="M6 0v9L1.5 4.5Z" fill="#000"/></svg>
<svg style="left:97px;top:901px" width="10" height="10"><path d="M3 0v9L7.5 4.5Z" fill="#000"/></svg>
<svg style="left:114px;top:901px" width="10" height="10"><path d="M9 0v9" stroke="#000" stroke-width="1.5"/><path d="M2 0v9L7 4.5Z" fill="#000"/></svg>
<svg style="left:0px;top:0px" width="300" height="915"><path d="M132 897 L136.5 911.5 H171 L175 897Z" fill="#000"/><path d="M175 897.5 L171.5 911.5 M175.5 897 L178 911.5 H231 L234 897" fill="#D4D0C8" stroke="#000"/><path d="M233.5 897 L236 911.5 H290 L294 897" fill="#D4D0C8" stroke="#000"/><path d="M132 897 L136.5 911.5 M175 897 L171 911.5" stroke="#fff" stroke-dasharray="1 1" fill="none"/></svg>
<div class="btn" style="left:851px;top:897px;width:7px;height:15px"></div>
<div class="a hatch" style="left:858px;top:897px;width:404px;height:15px"></div>
<div class="btn" style="left:858px;top:897px;width:16px;height:15px"></div>
<svg style="left:863px;top:900px" width="6" height="9"><path d="M4 0v8L0 4Z" fill="#000"/></svg>
<div class="btn" style="left:1002px;top:897px;width:16px;height:15px"></div>
<div class="btn" style="left:1246px;top:897px;width:16px;height:15px"></div>
<svg style="left:1252px;top:900px" width="6" height="9"><path d="M0 0v8L4 4Z" fill="#000"/></svg>
<div class="a" style="left:0;top:913px;width:1280px;height:1px;background:#fff"></div>
<div class="a" style="left:0;top:914px;width:1280px;height:1px;background:#000"></div>
<div class="a" style="left:0;top:915px;width:1280px;height:1px;background:#fff"></div>
<div class="a" style="left:0;top:918px;width:1280px;height:1px;background:#808080"></div>
<div class="a" style="left:0;top:919px;width:1280px;height:1px;background:#000"></div>
<div class="a" style="left:0;top:920px;width:1280px;height:1px;background:#eeece8"></div>
<div class="a" style="left:2px;top:922px;width:1276px;height:46px;border-top:1px solid #808080;border-left:1px solid #808080;border-right:1px solid #fff;border-bottom:1px solid #fff"></div>
<div class="a" style="left:3px;top:923px;width:1274px;height:44px;background:#fff;border-top:1px solid #000;border-left:1px solid #000"></div>
<div class="a" style="left:4px;top:950px;width:1256px;height:1px;background:#808080"></div>
<div class="btn" style="left:1260px;top:924px;width:16px;height:13px"></div>
<svg style="left:1264px;top:928px" width="8" height="6"><path d="M0 4h7L3.5 0.5Z" fill="#000"/></svg>
<div class="btn" style="left:1260px;top:937px;width:16px;height:13px"></div>
<svg style="left:1264px;top:941px" width="8" height="6"><path d="M0 0.5h7L3.5 4Z" fill="#000"/></svg>
<div class="a" style="left:1195px;top:951px;width:82px;height:16px;background:#D4D0C8"></div>
<div class="a hatch" style="left:1213px;top:951px;width:45px;height:15px"></div>
<div class="btn" style="left:1198px;top:951px;width:15px;height:15px"></div>
<svg style="left:1203px;top:955px" width="6" height="8"><path d="M4 0v7L0.5 3.5Z" fill="#000"/></svg>
<div class="btn" style="left:1213px;top:951px;width:16px;height:15px"></div>
<div class="btn" style="left:1243px;top:951px;width:16px;height:15px"></div>
<svg style="left:1249px;top:955px" width="6" height="8"><path d="M0.5 0v7L4 3.5Z" fill="#000"/></svg>
<div class="a" style="left:0;top:970px;width:1280px;height:1px;background:#808080"></div>
<div class="a" style="left:0;top:971px;width:1280px;height:1px;background:#fff"></div>
<div class="a" style="left:10px;top:974px;width:321px;height:22px;border-top:1px solid #808080;border-left:1px solid #808080;border-right:1px solid #fff;border-bottom:1px solid #fff"></div>
<div class="a" style="left:334px;top:974px;width:42px;height:22px;border-top:1px solid #fff;border-left:1px solid #fff;border-right:1px solid #808080;border-bottom:1px solid #808080"></div>
<div class="a" style="left:377px;top:974px;width:48px;height:22px;border-top:1px solid #fff;border-left:1px solid #fff;border-right:1px solid #808080;border-bottom:1px solid #808080"></div>
<div class="a" style="left:427px;top:974px;width:65px;height:22px;border-top:1px solid #fff;border-left:1px solid #fff;border-right:1px solid #808080;border-bottom:1px solid #808080"></div>
<div class="a" style="left:494px;top:974px;width:20px;height:22px;border-top:1px solid #fff;border-left:1px solid #fff;border-right:1px solid #808080;border-bottom:1px solid #808080"></div>
<div class="a" style="left:516px;top:974px;width:53px;height:22px;border-top:1px solid #fff;border-left:1px solid #fff;border-right:1px solid #808080;border-bottom:1px solid #808080"></div>
<div class="a" style="left:571px;top:974px;width:62px;height:22px;border-top:1px solid #fff;border-left:1px solid #fff;border-right:1px solid #808080;border-bottom:1px solid #808080"></div>
<div class="a" style="left:636px;top:974px;width:28px;height:22px;border-top:1px solid #808080;border-left:1px solid #808080;border-right:1px solid #fff;border-bottom:1px solid #fff;box-shadow:inset 1px 1px 0 #404040"></div>
<div class="a" style="left:666px;top:974px;width:38px;height:22px;border-top:1px solid #808080;border-left:1px solid #808080;border-right:1px solid #fff;border-bottom:1px solid #fff;box-shadow:inset 1px 1px 0 #404040"></div>
<div class="a" style="left:0;top:997px;width:1280px;height:1px;background:#fff"></div>
<svg style="left:0;top:0" width="1280" height="1000"><clipPath id="cv"><rect x="55" y="97" width="1207" height="800"/></clipPath><g clip-path="url(#cv)" fill="none" stroke="#fff" stroke-width="1" shape-rendering="crispEdges"><path d="M473.5 156 L473.5 377"/><path d="M1073.5 156 L1073.5 280"/><rect x="1073.0" y="283.5" width="1.2" height="1.2" fill="#fff" stroke="none"/><path d="M473.5 165.5 L1073.5 165.5"/><path d="M473.5 164.5 L492.5 161.5 L492.5 169.5 L473.5 166.5Z" fill="#fff" stroke="none"/><path d="M1073.5 164.5 L1054.5 161.5 L1054.5 169.5 L1073.5 166.5Z" fill="#fff" stroke="none"/><g stroke-width="1.25" transform="translate(744.5,143.5)"><path transform="translate(0,0)" d="M0.5 0.5 H10.5 C7.5 5 5 11 4 18.5"/><rect x="13.5" y="16.8" width="2" height="2" fill="#fff" stroke="none"/><path transform="translate(24,0)" d="M10.3 6.3 C10.3 10.5 8.3 12.5 5.5 12.5 C2.5 12.5 0.7 10 0.7 6.5 C0.7 2.8 2.8 0.5 5.5 0.5 C8.5 0.5 10.3 2.8 10.3 7 V12.5 C10.3 16.5 8.5 18.5 5.5 18.5 C3 18.5 1.3 17.3 1 15"/><path transform="translate(36,0)" d="M5.5 0.5 C0 0.5 0 18.5 5.5 18.5 C11 18.5 11 0.5 5.5 0.5Z"/></g><path d="M473.5 205.5 L655.5 205.5"/><path d="M473.5 204.5 L492.5 201.5 L492.5 209.5 L473.5 206.5Z" fill="#fff" stroke="none"/><path d="M564.5 204.5 L545.5 201.5 L545.5 209.5 L564.5 206.5Z" fill="#fff" stroke="none"/><path d="M564.5 204.5 L583.5 201.5 L583.5 209.5 L564.5 206.5Z" fill="#fff" stroke="none"/><path d="M655.5 204.5 L636.5 201.5 L636.5 209.5 L655.5 206.5Z" fill="#fff" stroke="none"/><path d="M564.5 196 L564.5 262"/><rect x="564.0" y="265.5" width="1.2" height="1.2" fill="#fff" stroke="none"/><path d="M655.5 196 L655.5 258"/><rect x="655.0" y="260.5" width="1.2" height="1.2" fill="#fff" stroke="none"/><path d="M693.5 196 L693.5 253"/><rect x="693.0" y="256.5" width="1.2" height="1.2" fill="#fff" stroke="none"/><path d="M1020.5 196 L1020.5 248"/><rect x="1020.0" y="251.5" width="1.2" height="1.2" fill="#fff" stroke="none"/><g stroke-width="1.25" transform="translate(494.5,183.5)"><path transform="translate(0,0)" d="M1.5 4.5 L6.5 0.5 V18.5"/><rect x="13.5" y="16.8" width="2" height="2" fill="#fff" stroke="none"/><path transform="translate(24,0)" d="M0.8 5 C0.8 1.5 3 0.5 5.5 0.5 C8.5 0.5 10.3 2.2 10.3 5 C10.3 8 7 10.5 4 13 C2 14.7 0.7 16.5 0.7 18.5 H10.5"/><path transform="translate(36,0)" d="M5.5 0.5 C0 0.5 0 18.5 5.5 18.5 C11 18.5 11 0.5 5.5 0.5Z"/></g><g stroke-width="1.25" transform="translate(585.5,183.5)"><path transform="translate(0,0)" d="M1.5 4.5 L6.5 0.5 V18.5"/><rect x="13.5" y="16.8" width="2" height="2" fill="#fff" stroke="none"/><path transform="translate(24,0)" d="M0.8 5 C0.8 1.5 3 0.5 5.5 0.5 C8.5 0.5 10.3 2.2 10.3 5 C10.3 8 7 10.5 4 13 C2 14.7 0.7 16.5 0.7 18.5 H10.5"/><path transform="translate(36,0)" d="M5.5 0.5 C0 0.5 0 18.5 5.5 18.5 C11 18.5 11 0.5 5.5 0.5Z"/></g><path d="M617 233.5 L789 233.5"/><path d="M655.5 232.5 L636.5 229.5 L636.5 237.5 L655.5 234.5Z" fill="#fff" stroke="none"/><path d="M693.5 232.5 L712.5 229.5 L712.5 237.5 L693.5 234.5Z" fill="#fff" stroke="none"/><g stroke-width="1.25" transform="translate(735.5,210)"><path transform="translate(0,0)" d="M5.5 0.5 C0 0.5 0 18.5 5.5 18.5 C11 18.5 11 0.5 5.5 0.5Z"/><rect x="13.5" y="16.8" width="2" height="2" fill="#fff" stroke="none"/><path transform="translate(24,0)" d="M10 0.5 H2 L1.2 9 C2.5 7.8 3.8 7.4 5.5 7.4 C8.8 7.4 10.5 9.8 10.5 13 C10.5 16.5 8.5 18.5 5.5 18.5 C2.5 18.5 0.8 16.8 0.5 14.8"/><path transform="translate(36,0)" d="M5.5 0.5 C0 0.5 0 18.5 5.5 18.5 C11 18.5 11 0.5 5.5 0.5Z"/></g><path d="M693.5 206.5 L1150 206.5"/><path d="M693.5 205.5 L712.5 202.5 L712.5 210.5 L693.5 207.5Z" fill="#fff" stroke="none"/><path d="M1020.5 205.5 L1001.5 202.5 L1001.5 210.5 L1020.5 207.5Z" fill="#fff" stroke="none"/><path d="M1020.5 205.5 L1039.5 202.5 L1039.5 210.5 L1020.5 207.5Z" fill="#fff" stroke="none"/><path d="M1073.5 205.5 L1054.5 202.5 L1054.5 210.5 L1073.5 207.5Z" fill="#fff" stroke="none"/><g stroke-width="1.25" transform="translate(833,183.5)"><path transform="translate(0,0)" d="M8 18.5 V0.5 L0.5 13.2 H11"/><rect x="13.5" y="16.8" width="2" height="2" fill="#fff" stroke="none"/><path transform="translate(24,0)" d="M0.8 4.5 C1.2 1.6 3 0.5 5.5 0.5 C8.5 0.5 10 2.3 10 4.8 C10 7.4 8 9 5 9 C8.5 9 10.5 11 10.5 13.8 C10.5 17 8.5 18.5 5.5 18.5 C2.5 18.5 0.8 17 0.5 14.5"/><path transform="translate(36,0)" d="M5.5 0.5 C0 0.5 0 18.5 5.5 18.5 C11 18.5 11 0.5 5.5 0.5Z"/></g><g stroke-width="1.25" transform="translate(1096.5,183.5)"><path transform="translate(0,0)" d="M5.5 0.5 C0 0.5 0 18.5 5.5 18.5 C11 18.5 11 0.5 5.5 0.5Z"/><rect x="13.5" y="16.8" width="2" height="2" fill="#fff" stroke="none"/><path transform="translate(24,0)" d="M0.5 0.5 H10.5 C7.5 5 5 11 4 18.5"/><path transform="translate(36,0)" d="M5.5 0.5 C0 0.5 0 18.5 5.5 18.5 C11 18.5 11 0.5 5.5 0.5Z"/></g><path d="M844.5 271 L844.5 420"/><path d="M843.5 307.5 L840.5 288.5 L848.5 288.5 L845.5 307.5Z" fill="#fff" stroke="none"/><path d="M843.5 325 L840.5 344 L848.5 344 L845.5 325Z" fill="#fff" stroke="none"/><path d="M880.5 230 L880.5 387"/><path d="M879.5 322 L876.5 303 L884.5 303 L881.5 322Z" fill="#fff" stroke="none"/><path d="M879.5 349 L876.5 368 L884.5 368 L881.5 349Z" fill="#fff" stroke="none"/><g stroke-width="1.25" transform="translate(856,283) rotate(-90)"><path transform="translate(0,0)" d="M5.5 0.5 C0 0.5 0 18.5 5.5 18.5 C11 18.5 11 0.5 5.5 0.5Z"/><rect x="13.5" y="16.8" width="2" height="2" fill="#fff" stroke="none"/><path transform="translate(24,0)" d="M0.8 4.5 C1.2 1.6 3 0.5 5.5 0.5 C8.5 0.5 10 2.3 10 4.8 C10 7.4 8 9 5 9 C8.5 9 10.5 11 10.5 13.8 C10.5 17 8.5 18.5 5.5 18.5 C2.5 18.5 0.8 17 0.5 14.5"/><path transform="translate(36,0)" d="M5.5 0.5 C0 0.5 0 18.5 5.5 18.5 C11 18.5 11 0.5 5.5 0.5Z"/></g><g stroke-width="1.25" transform="translate(820.5,415) rotate(-90)"><path transform="translate(0,0)" d="M5.5 0.5 C0 0.5 0 18.5 5.5 18.5 C11 18.5 11 0.5 5.5 0.5Z"/><rect x="13.5" y="16.8" width="2" height="2" fill="#fff" stroke="none"/><path transform="translate(24,0)" d="M0.8 5 C0.8 1.5 3 0.5 5.5 0.5 C8.5 0.5 10.3 2.2 10.3 5 C10.3 8 7 10.5 4 13 C2 14.7 0.7 16.5 0.7 18.5 H10.5"/><path transform="translate(36,0)" d="M5.5 0.5 C0 0.5 0 18.5 5.5 18.5 C11 18.5 11 0.5 5.5 0.5Z"/></g><path d="M262.5 307.5 L262.5 755"/><path d="M261.5 307.5 L258.5 326.5 L266.5 326.5 L263.5 307.5Z" fill="#fff" stroke="none"/><path d="M261.5 755 L258.5 736 L266.5 736 L263.5 755Z" fill="#fff" stroke="none"/><path d="M313.5 307.5 L313.5 709"/><path d="M312.5 307.5 L309.5 326.5 L317.5 326.5 L314.5 307.5Z" fill="#fff" stroke="none"/><path d="M312.5 382.5 L309.5 363.5 L317.5 363.5 L314.5 382.5Z" fill="#fff" stroke="none"/><path d="M312.5 382.5 L309.5 401.5 L317.5 401.5 L314.5 382.5Z" fill="#fff" stroke="none"/><path d="M312.5 458.5 L309.5 439.5 L317.5 439.5 L314.5 458.5Z" fill="#fff" stroke="none"/><path d="M312.5 458.5 L309.5 477.5 L317.5 477.5 L314.5 458.5Z" fill="#fff" stroke="none"/><path d="M312.5 709 L309.5 690 L317.5 690 L314.5 709Z" fill="#fff" stroke="none"/><path d="M303 382.5 L457 382.5"/><rect x="459.5" y="382.0" width="1.2" height="1.2" fill="#fff" stroke="none"/><path d="M303 458.5 L362 458.5"/><rect x="365.5" y="458.0" width="1.2" height="1.2" fill="#fff" stroke="none"/><g stroke-width="1.25" transform="translate(289,369.5) rotate(-90)"><path transform="translate(0,0)" d="M1.5 4.5 L6.5 0.5 V18.5"/><rect x="13.5" y="16.8" width="2" height="2" fill="#fff" stroke="none"/><path transform="translate(24,0)" d="M5.5 0.5 C0 0.5 0 18.5 5.5 18.5 C11 18.5 11 0.5 5.5 0.5Z"/><path transform="translate(36,0)" d="M5.5 0.5 C0 0.5 0 18.5 5.5 18.5 C11 18.5 11 0.5 5.5 0.5Z"/></g><g stroke-width="1.25" transform="translate(289,445.5) rotate(-90)"><path transform="translate(0,0)" d="M1.5 4.5 L6.5 0.5 V18.5"/><rect x="13.5" y="16.8" width="2" height="2" fill="#fff" stroke="none"/><path transform="translate(24,0)" d="M5.5 0.5 C0 0.5 0 18.5 5.5 18.5 C11 18.5 11 0.5 5.5 0.5Z"/><path transform="translate(36,0)" d="M5.5 0.5 C0 0.5 0 18.5 5.5 18.5 C11 18.5 11 0.5 5.5 0.5Z"/></g><g stroke-width="1.25" transform="translate(238.5,555) rotate(-90)"><path transform="translate(0,0)" d="M10 0.5 H2 L1.2 9 C2.5 7.8 3.8 7.4 5.5 7.4 C8.8 7.4 10.5 9.8 10.5 13 C10.5 16.5 8.5 18.5 5.5 18.5 C2.5 18.5 0.8 16.8 0.5 14.8"/><rect x="13.5" y="16.8" width="2" height="2" fill="#fff" stroke="none"/><path transform="translate(24,0)" d="M10.3 6.3 C10.3 10.5 8.3 12.5 5.5 12.5 C2.5 12.5 0.7 10 0.7 6.5 C0.7 2.8 2.8 0.5 5.5 0.5 C8.5 0.5 10.3 2.8 10.3 7 V12.5 C10.3 16.5 8.5 18.5 5.5 18.5 C3 18.5 1.3 17.3 1 15"/><path transform="translate(36,0)" d="M5.5 0.5 C0 0.5 0 18.5 5.5 18.5 C11 18.5 11 0.5 5.5 0.5Z"/></g><g stroke-width="1.25" transform="translate(289.5,608) rotate(-90)"><path transform="translate(0,0)" d="M0.8 4.5 C1.2 1.6 3 0.5 5.5 0.5 C8.5 0.5 10 2.3 10 4.8 C10 7.4 8 9 5 9 C8.5 9 10.5 11 10.5 13.8 C10.5 17 8.5 18.5 5.5 18.5 C2.5 18.5 0.8 17 0.5 14.5"/><rect x="13.5" y="16.8" width="2" height="2" fill="#fff" stroke="none"/><path transform="translate(24,0)" d="M0.8 4.5 C1.2 1.6 3 0.5 5.5 0.5 C8.5 0.5 10 2.3 10 4.8 C10 7.4 8 9 5 9 C8.5 9 10.5 11 10.5 13.8 C10.5 17 8.5 18.5 5.5 18.5 C2.5 18.5 0.8 17 0.5 14.5"/><path transform="translate(36,0)" d="M5.5 0.5 C0 0.5 0 18.5 5.5 18.5 C11 18.5 11 0.5 5.5 0.5Z"/></g><path d="M285.5 671 L285.5 819.5"/><path d="M284.5 706 L281.5 690 L289.5 690 L286.5 706Z" fill="#fff" stroke="none"/><path d="M284.5 727.5 L281.5 743.5 L289.5 743.5 L286.5 727.5Z" fill="#fff" stroke="none"/><path d="M275 709.5 L324 709.5"/><path d="M275 724.5 L296 724.5"/><path d="M301 724.5 L337.5 724.5"/><path d="M328.5 686 L328.5 850.5"/><path d="M327.5 721 L324.5 705 L332.5 705 L329.5 721Z" fill="#fff" stroke="none"/><path d="M327.5 759 L324.5 775 L332.5 775 L329.5 759Z" fill="#fff" stroke="none"/><path d="M252 755.5 L337.5 755.5"/><g stroke-width="1.25" transform="translate(261,815) rotate(-90)"><path transform="translate(0,0)" d="M5.5 0.5 C0 0.5 0 18.5 5.5 18.5 C11 18.5 11 0.5 5.5 0.5Z"/><rect x="13.5" y="16.8" width="2" height="2" fill="#fff" stroke="none"/><path transform="translate(24,0)" d="M0.8 5 C0.8 1.5 3 0.5 5.5 0.5 C8.5 0.5 10.3 2.2 10.3 5 C10.3 8 7 10.5 4 13 C2 14.7 0.7 16.5 0.7 18.5 H10.5"/><path transform="translate(36,0)" d="M5.5 0.5 C0 0.5 0 18.5 5.5 18.5 C11 18.5 11 0.5 5.5 0.5Z"/></g><g stroke-width="1.25" transform="translate(304,846) rotate(-90)"><path transform="translate(0,0)" d="M5.5 0.5 C0 0.5 0 18.5 5.5 18.5 C11 18.5 11 0.5 5.5 0.5Z"/><rect x="13.5" y="16.8" width="2" height="2" fill="#fff" stroke="none"/><path transform="translate(24,0)" d="M8 18.5 V0.5 L0.5 13.2 H11"/><path transform="translate(36,0)" d="M5.5 0.5 C0 0.5 0 18.5 5.5 18.5 C11 18.5 11 0.5 5.5 0.5Z"/></g><path d="M470.5 758 L470.5 826"/><path d="M493.5 767 L493.5 853"/><rect x="493.0" y="761.5" width="1.2" height="1.2" fill="#fff" stroke="none"/><path d="M417.5 758 L417.5 886.5"/><path d="M652.5 758 L652.5 886.5"/><path d="M432 784.5 L589 784.5"/><path d="M470.5 783.5 L451.5 780.5 L451.5 788.5 L470.5 785.5Z" fill="#fff" stroke="none"/><path d="M493.5 783.5 L512.5 780.5 L512.5 788.5 L493.5 785.5Z" fill="#fff" stroke="none"/><g stroke-width="1.25" transform="translate(536,762.5)"><path transform="translate(0,0)" d="M5.5 0.5 C0 0.5 0 18.5 5.5 18.5 C11 18.5 11 0.5 5.5 0.5Z"/><rect x="13.5" y="16.8" width="2" height="2" fill="#fff" stroke="none"/><path transform="translate(24,0)" d="M0.8 4.5 C1.2 1.6 3 0.5 5.5 0.5 C8.5 0.5 10 2.3 10 4.8 C10 7.4 8 9 5 9 C8.5 9 10.5 11 10.5 13.8 C10.5 17 8.5 18.5 5.5 18.5 C2.5 18.5 0.8 17 0.5 14.5"/><path transform="translate(36,0)" d="M5.5 0.5 C0 0.5 0 18.5 5.5 18.5 C11 18.5 11 0.5 5.5 0.5Z"/></g><path d="M417.5 815.5 L548 815.5"/><path d="M417.5 814.5 L436.5 811.5 L436.5 819.5 L417.5 816.5Z" fill="#fff" stroke="none"/><path d="M470.5 814.5 L451.5 811.5 L451.5 819.5 L470.5 816.5Z" fill="#fff" stroke="none"/><g stroke-width="1.25" transform="translate(494.5,793)"><path transform="translate(0,0)" d="M5.5 0.5 C0 0.5 0 18.5 5.5 18.5 C11 18.5 11 0.5 5.5 0.5Z"/><rect x="13.5" y="16.8" width="2" height="2" fill="#fff" stroke="none"/><path transform="translate(24,0)" d="M0.5 0.5 H10.5 C7.5 5 5 11 4 18.5"/><path transform="translate(36,0)" d="M5.5 0.5 C0 0.5 0 18.5 5.5 18.5 C11 18.5 11 0.5 5.5 0.5Z"/></g><path d="M493.5 842.5 L652.5 842.5"/><path d="M493.5 841.5 L512.5 838.5 L512.5 846.5 L493.5 843.5Z" fill="#fff" stroke="none"/><path d="M652.5 841.5 L633.5 838.5 L633.5 846.5 L652.5 843.5Z" fill="#fff" stroke="none"/><g stroke-width="1.25" transform="translate(549,820.5)"><path transform="translate(0,0)" d="M0.8 5 C0.8 1.5 3 0.5 5.5 0.5 C8.5 0.5 10.3 2.2 10.3 5 C10.3 8 7 10.5 4 13 C2 14.7 0.7 16.5 0.7 18.5 H10.5"/><rect x="13.5" y="16.8" width="2" height="2" fill="#fff" stroke="none"/><path transform="translate(24,0)" d="M1.5 4.5 L6.5 0.5 V18.5"/><path transform="translate(36,0)" d="M5.5 0.5 C0 0.5 0 18.5 5.5 18.5 C11 18.5 11 0.5 5.5 0.5Z"/></g><path d="M417.5 876.5 L652.5 876.5"/><path d="M417.5 875.5 L436.5 872.5 L436.5 880.5 L417.5 877.5Z" fill="#fff" stroke="none"/><path d="M652.5 875.5 L633.5 872.5 L633.5 880.5 L652.5 877.5Z" fill="#fff" stroke="none"/><g stroke-width="1.25" transform="translate(510.5,853)"><path transform="translate(0,0)" d="M0.8 4.5 C1.2 1.6 3 0.5 5.5 0.5 C8.5 0.5 10 2.3 10 4.8 C10 7.4 8 9 5 9 C8.5 9 10.5 11 10.5 13.8 C10.5 17 8.5 18.5 5.5 18.5 C2.5 18.5 0.8 17 0.5 14.5"/><rect x="13.5" y="16.8" width="2" height="2" fill="#fff" stroke="none"/><path transform="translate(24,0)" d="M1.5 4.5 L6.5 0.5 V18.5"/><path transform="translate(36,0)" d="M5.5 0.5 C0 0.5 0 18.5 5.5 18.5 C11 18.5 11 0.5 5.5 0.5Z"/></g><path d="M252 307.5 L652 307.5"/><path d="M656 307.5 L726 307.5 L1176 313.5"/><path d="M656.5 307.5 L656.5 323.5 L627.5 324.5 L626.5 341 L596.5 343.5 L596.5 362.5 L562.5 362.5 L562.5 380.5 L537 380.5 L492 379.5 L473.5 380.5 L472.5 520 L471.5 645 L470.5 707.5 L417 721.5 L401 721.5 L352.5 720.5 L260.6 718.5 L138 715.5 L107.5 715.5"/><path d="M352.5 720.5 L383.5 753.5 L671 755.5 L671.5 754.5 L691.5 754.5 L959.5 488.5"/><path d="M511 380.5 L532 459.5 L649.5 722.5 L649.5 739 L650.5 739 L650.5 755"/><rect x="652.0" y="753.0" width="1.2" height="1.2" fill="#fff" stroke="none"/><path d="M472.5 458.5 L532 459.5"/><path d="M416.5 721.5 L416.5 753"/><path d="M495 459.5 L494.5 581 L493.5 664 L492.5 705 L510 722.5 L649.5 722.5"/><path d="M515 395.5 L604.5 395.5 L649.5 396.5 L848.5 598.5"/><path d="M55 748 L107.5 715.5 L213.5 645 L666 561.5 L818 504.5 L959 489 L1017 482 L1048 380.5"/><path d="M577 395.5 L658 344.5"/><path d="M632.5 396.5 L700 344.5"/><path d="M656 344.5 L1021 348.5"/><path d="M694.5 307.5 L694.5 344.5"/><path d="M694 324.5 L1021 326.5"/><path d="M1021.5 312 L1021.5 357"/><path d="M1072.5 312 L1072.5 357"/><path d="M1011.5 357 L1080.5 357"/><path d="M1011.5 357 L1011.5 377.5 L1076 377.5"/><path d="M1031.5 312 L1031.5 316.5 L1037 320 L1064.5 319.5 L1064.5 312"/><path d="M1038 320 L1038.5 342.5 L1057.5 342.5 L1057.5 320"/><path d="M1093.5 313.5 L1080.5 357 L1076 377.5"/><path d="M736 302.5 L817.5 302.5"/><path d="M790 298 L817.5 302.5"/><ellipse cx="702.8" cy="334.5" rx="8.4" ry="11.5"/><ellipse cx="719" cy="334.5" rx="8.4" ry="11.5"/><ellipse cx="735" cy="334.5" rx="8.4" ry="11.5"/><ellipse cx="751.4" cy="334.5" rx="8.4" ry="11.5"/><ellipse cx="964.4" cy="338" rx="8" ry="11.5"/><ellipse cx="980.3" cy="338" rx="8" ry="11.5"/><ellipse cx="996.6" cy="338" rx="8" ry="11.5"/><ellipse cx="1013" cy="338" rx="8" ry="11.5"/><ellipse cx="1021" cy="367.8" rx="7.5" ry="10"/><ellipse cx="1035.7" cy="367.8" rx="7.5" ry="10"/><ellipse cx="1050.3" cy="367.8" rx="7.5" ry="10"/><ellipse cx="1064.8" cy="367.8" rx="7.5" ry="10"/><ellipse cx="622" cy="383" rx="8.5" ry="12" transform="rotate(-32 622 383)"/><ellipse cx="636" cy="373.5" rx="8.5" ry="12" transform="rotate(-32 636 373.5)"/><ellipse cx="650" cy="364" rx="8.5" ry="12" transform="rotate(-32 650 364)"/><ellipse cx="664" cy="355" rx="8.5" ry="12" transform="rotate(-32 664 355)"/><path d="M531 288.5 L551 288.5 L541.0 307.5 L531 288.5"/><path d="M333 364.5 L352.5 364.5 L342.75 382.5 L333 364.5"/><path d="M175 696.5 L194.5 696.5 L184.75 715.5 L175 696.5"/><path d="M506.5 734.5 L525.5 734.5 L516.0 753.5 L506.5 734.5"/><path transform="translate(553.5,432)" d="M3.9 13.3 L18.75 12.5 L17.2 22.7 L7 23.4 L3.1 19.5Z M18.75 12.5 L19.5 5.5 L29.7 4.7 L30.5 13.3 M29.7 4.7 L40.6 4.7 L43 11.7 L41.4 13.3 L30.5 13.3 L20.3 14 M43 11.7 L50.8 13.3 L53 18 L51.6 23.4 L42.2 24.2 L41.4 13.3 M7 23.4 L6.25 28.1 L10.9 33.6 L15.6 35.2 L18.75 30.5 L17.2 22.7 M30.5 13.3 L30.5 38.3 L26.6 39 L18.75 35.2 L18.75 30.5 M29.7 25.8 L35.9 28.9 L40.6 26.6 L42.2 24.2 M40.6 26.6 L42.2 32 L39.8 36.7 L30.5 38.3 M42.2 24.2 L50.8 24.2 L53.9 28.1 L53.1 33.6 L48.4 35.9 L42.2 33.6 M48.4 35.9 L53.1 33.6 L57.8 39.8 L56.25 46.1 L51.6 47.7 L43.75 44.5 L48.4 35.9 M39.8 36.7 L43.75 44.5 L34.4 47.7 L28.9 46.1 L26.6 39 M10.9 33.6 L10.2 40.6 L15.6 46.1 L24.2 48.4 L28.9 46.1 M15.6 35.2 L25 35.9 L26.6 39 M3.9 7.8 L7.8 11.7 M18.75 0 L19.5 5.5 M0 31.25 L9.4 32 M0.8 42.2 L10.2 40.6 M20.3 55.5 L24.2 48.4 M33.6 60.2 L34.4 47.7 M53.9 28.1 L61.7 26.6 M57.8 39.8 L63.3 40.2"/><path transform="translate(711,592)" d="M3.9 13.3 L18.75 12.5 L17.2 22.7 L7 23.4 L3.1 19.5Z M18.75 12.5 L19.5 5.5 L29.7 4.7 L30.5 13.3 M29.7 4.7 L40.6 4.7 L43 11.7 L41.4 13.3 L30.5 13.3 L20.3 14 M43 11.7 L50.8 13.3 L53 18 L51.6 23.4 L42.2 24.2 L41.4 13.3 M7 23.4 L6.25 28.1 L10.9 33.6 L15.6 35.2 L18.75 30.5 L17.2 22.7 M30.5 13.3 L30.5 38.3 L26.6 39 L18.75 35.2 L18.75 30.5 M29.7 25.8 L35.9 28.9 L40.6 26.6 L42.2 24.2 M40.6 26.6 L42.2 32 L39.8 36.7 L30.5 38.3 M42.2 24.2 L50.8 24.2 L53.9 28.1 L53.1 33.6 L48.4 35.9 L42.2 33.6 M48.4 35.9 L53.1 33.6 L57.8 39.8 L56.25 46.1 L51.6 47.7 L43.75 44.5 L48.4 35.9 M39.8 36.7 L43.75 44.5 L34.4 47.7 L28.9 46.1 L26.6 39 M10.9 33.6 L10.2 40.6 L15.6 46.1 L24.2 48.4 L28.9 46.1 M15.6 35.2 L25 35.9 L26.6 39 M3.9 7.8 L7.8 11.7 M18.75 0 L19.5 5.5 M0 31.25 L9.4 32 M0.8 42.2 L10.2 40.6 M20.3 55.5 L24.2 48.4 M33.6 60.2 L34.4 47.7 M53.9 28.1 L61.7 26.6 M57.8 39.8 L63.3 40.2"/><path transform="translate(382,725.5) scale(0.43)" stroke-width="2.3" d="M3.9 13.3 L18.75 12.5 L17.2 22.7 L7 23.4 L3.1 19.5Z M18.75 12.5 L19.5 5.5 L29.7 4.7 L30.5 13.3 M29.7 4.7 L40.6 4.7 L43 11.7 L41.4 13.3 L30.5 13.3 L20.3 14 M43 11.7 L50.8 13.3 L53 18 L51.6 23.4 L42.2 24.2 L41.4 13.3 M7 23.4 L6.25 28.1 L10.9 33.6 L15.6 35.2 L18.75 30.5 L17.2 22.7 M30.5 13.3 L30.5 38.3 L26.6 39 L18.75 35.2 L18.75 30.5 M29.7 25.8 L35.9 28.9 L40.6 26.6 L42.2 24.2 M40.6 26.6 L42.2 32 L39.8 36.7 L30.5 38.3 M42.2 24.2 L50.8 24.2 L53.9 28.1 L53.1 33.6 L48.4 35.9 L42.2 33.6 M48.4 35.9 L53.1 33.6 L57.8 39.8 L56.25 46.1 L51.6 47.7 L43.75 44.5 L48.4 35.9 M39.8 36.7 L43.75 44.5 L34.4 47.7 L28.9 46.1 L26.6 39 M10.9 33.6 L10.2 40.6 L15.6 46.1 L24.2 48.4 L28.9 46.1 M15.6 35.2 L25 35.9 L26.6 39 M3.9 7.8 L7.8 11.7 M18.75 0 L19.5 5.5 M0 31.25 L9.4 32 M0.8 42.2 L10.2 40.6 M20.3 55.5 L24.2 48.4 M33.6 60.2 L34.4 47.7 M53.9 28.1 L61.7 26.6 M57.8 39.8 L63.3 40.2"/><path d="M589 512 Q593 508 598 511 Q603 514 607 510"/><path d="M1000.5 348.5 L1000.5 413"/><path d="M968 380.5 L1032 380.5"/><rect x="997.5" y="377.5" width="6" height="6"/><path d="M1092.8 317.5 L1097.6 316.6 L1104 321.3"/><path d="M1086.3 342.8 L1097.6 340.4"/><path d="M1088.2 338 L1095.6 346.6"/><path d="M1080.7 362.5 L1084.5 366.3 L1091 365.3"/><path d="M1047 387.8 L1052.6 387.3 L1058 391.6"/><path d="M1039 411.7 L1052.3 410.2"/><path d="M1040.6 405.5 L1050.8 415.6"/><path d="M1031.2 436 L1044.5 434.4"/><path d="M1032.8 431.2 L1042.5 440.6"/><path d="M1025 455.5 L1030.5 460.2 L1036.7 459.4"/><path d="M90 727 L94.7 752"/><path d="M98.4 722 L102.7 747.5"/><path d="M106 716.6 L109.7 742.8"/><path d="M79.7 737.2 L91.9 737.2"/><path d="M64.7 748.4 L94.7 749.4"/><path d="M56 748.5 L60.7 774"/><path d="M64.5 745 L68.3 769.4"/><path d="M65.5 758.5 L75.9 758.5"/><path d="M73 710.5 L82.5 722.5 L91.5 710.5"/><path d="M82.5 722.5 L82.5 735"/><path d="M80.5 774 L80.5 860"/><path d="M71.5 860 L71.5 879.5 L90.5 879.5 L90.5 860"/><path d="M90.5 869.5 L176.5 869.5"/><path d="M176.5 862 L200.5 869.5 L176.5 878.5 L176.5 862"/><path d="M176.5 866 L200.5 869.5 L176.5 875"/><path d="M72.5 774 L80.5 750.5 L89.5 774 L72.5 774"/><path d="M77 774 L80.5 750.5 L84 774"/><path d="M221.5 858 L238.5 881.5"/><path d="M238.5 858 L221.5 881.5"/></g></svg>
<div class="a" style="left:12px;top:833px;width:171px;height:28px;background:#D4D0C8;border-top:1px solid #fff;border-left:1px solid #fff;border-right:1px solid #404040;border-bottom:1px solid #404040;box-shadow:inset -1px -1px 0 #808080"></div>
<svg style="left:15px;top:836px" width="10" height="22"><rect x="2" y="2" width="3" height="3" fill="#a00"/><path d="M1.5 8v12M5.5 8v12" stroke="#fff" stroke-width="1.2"/><path d="M2.5 8v12M6.5 8v12" stroke="#808080"/></svg>
<svg style="left:27px;top:839px" width="8" height="18"><path d="M0.5 10v5h4" stroke="#808080" fill="none" stroke-width="1.3"/></svg>
<div class="a" style="left:32px;top:837px;font-size:18px;line-height:20px;font-family:Liberation Sans">A</div>
<div class="a" style="left:48px;top:837px;font-size:16px;line-height:20px">般</div>
<svg style="left:72px;top:838px" width="16" height="18"><path d="M1 9 h10 v5 a5 3 0 0 1 -10 0z" fill="#ff0" stroke="#000"/><path d="M3 8 L6 2 L8 9" stroke="#c00" stroke-width="2" fill="none"/><circle cx="11" cy="5" r="4" fill="#fff" stroke="#008"/></svg>
<svg style="left:93px;top:838px" width="16" height="18"><path d="M1.5 2.5 h11 v13 h-11z" fill="#088" stroke="#000"/><path d="M1.5 2.5 a2 2 0 0 1 2 -2 h9" fill="none" stroke="#000"/><path d="M7 15 L15 6" stroke="#c00" stroke-width="2"/></svg>
<svg style="left:116px;top:838px" width="16" height="18"><rect x="0.5" y="1.5" width="12" height="13" fill="#fff" stroke="#000"/><path d="M0.5 1.5h12" stroke="#00f" stroke-width="2" stroke-dasharray="1 1"/><path d="M3 6h7M3 9h5" stroke="#000"/><path d="M7 9 L13 13 L10 14z" fill="#fff" stroke="#000"/><path d="M12 14 L15 11 V16 H12z" fill="#00f"/></svg>
<svg style="left:137px;top:838px" width="16" height="18"><rect x="5" y="5" width="9" height="8" fill="#800"/><rect x="3" y="11" width="10" height="5" fill="#fff" stroke="#000"/><text x="0" y="14" font-size="16" font-weight="bold" fill="#ff0" stroke="#000" stroke-width="0.6" font-family="Liberation Sans">?</text></svg>
<div class="a" style="left:157px;top:836px;font-size:7px;line-height:10px;font-weight:bold;letter-spacing:0.3px">CAPS<br>KANA</div>
<svg style="left:0;top:0" width="1280" height="1000"><text x="20.5" y="13" font-size="12.5" font-weight="normal" fill="#fff" font-family="Liberation Sans" textLength="389.5" lengthAdjust="spacingAndGlyphs">Autodesk Map 5 - [C:¥Photo¥strict secrecy¥Yahatahama¥Dan¥Osima_5.dwg]</text><text x="26.25" y="32" font-size="12.5" font-weight="normal" fill="#000" font-family="Liberation Sans" textLength="42.5" lengthAdjust="spacingAndGlyphs">ﾌｧｲﾙ(F)</text><text x="83.75" y="32" font-size="12.5" font-weight="normal" fill="#000" font-family="Liberation Sans" textLength="38.75" lengthAdjust="spacingAndGlyphs">編集(E)</text><text x="136.25" y="32" font-size="12.5" font-weight="normal" fill="#000" font-family="Liberation Sans" textLength="40.0" lengthAdjust="spacingAndGlyphs">表示(V)</text><text x="191.25" y="32" font-size="12.5" font-weight="normal" fill="#000" font-family="Liberation Sans" textLength="33.75" lengthAdjust="spacingAndGlyphs">挿入(I)</text><text x="240" y="32" font-size="12.5" font-weight="normal" fill="#000" font-family="Liberation Sans" textLength="38.75" lengthAdjust="spacingAndGlyphs">形式(O)</text><text x="293.75" y="32" font-size="12.5" font-weight="normal" fill="#000" font-family="Liberation Sans" textLength="37.5" lengthAdjust="spacingAndGlyphs">ﾂｰﾙ(T)</text><text x="345.9" y="32" font-size="12.5" font-weight="normal" fill="#000" font-family="Liberation Sans" textLength="39.30000000000001" lengthAdjust="spacingAndGlyphs">作成(D)</text><text x="399.8" y="32" font-size="12.5" font-weight="normal" fill="#000" font-family="Liberation Sans" textLength="39.099999999999966" lengthAdjust="spacingAndGlyphs">寸法(N)</text><text x="454.4" y="32" font-size="12.5" font-weight="normal" fill="#000" font-family="Liberation Sans" textLength="39.85000000000002" lengthAdjust="spacingAndGlyphs">修正(M)</text><text x="508.9" y="32" font-size="12.5" font-weight="normal" fill="#000" font-family="Liberation Sans" textLength="53.10000000000002" lengthAdjust="spacingAndGlyphs">ｳｨﾝﾄﾞｳ(W)</text><text x="576.7" y="32" font-size="12.5" font-weight="normal" fill="#000" font-family="Liberation Sans" textLength="37.299999999999955" lengthAdjust="spacingAndGlyphs">ﾏｯﾌﾟ(P)</text><text x="629.9" y="32" font-size="12.5" font-weight="normal" fill="#000" font-family="Liberation Sans" textLength="38.60000000000002" lengthAdjust="spacingAndGlyphs">ﾍﾙﾌﾟ(H)</text><text x="146" y="87.5" font-size="16" font-weight="normal" fill="#000" font-family="Liberation Sans" textLength="38.5" lengthAdjust="spacingAndGlyphs">seika</text><text x="291.5" y="86.5" font-size="12.5" font-weight="bold" fill="#000" font-family="Liberation Sans" textLength="49" lengthAdjust="spacingAndGlyphs">By...yer</text><text x="442" y="86.5" font-size="12.5" font-weight="bold" fill="#000" font-family="Liberation Sans" textLength="57.5" lengthAdjust="spacingAndGlyphs">ByLayer</text><text x="584" y="86.5" font-size="12.5" font-weight="bold" fill="#000" font-family="Liberation Sans" textLength="57.5" lengthAdjust="spacingAndGlyphs">ByLayer</text><text x="679" y="85.5" font-size="12.5" font-weight="bold" fill="#808080" font-family="Liberation Sans" textLength="57.5" lengthAdjust="spacingAndGlyphs">ByColor</text><text x="139" y="909.5" font-size="12" font-weight="bold" fill="#fff" font-family="Liberation Sans" textLength="28" lengthAdjust="spacingAndGlyphs">ﾓﾃﾞﾙ</text><text x="183.5" y="909.5" font-size="12" font-weight="normal" fill="#000" font-family="Liberation Sans" textLength="44.5" lengthAdjust="spacingAndGlyphs">ﾚｲｱｳﾄ1</text><text x="242.5" y="909.5" font-size="12" font-weight="normal" fill="#000" font-family="Liberation Sans" textLength="40" lengthAdjust="spacingAndGlyphs">ﾚｲｱｳﾄ2</text><text x="4" y="942" font-size="19" font-weight="bold" fill="#000" font-family="Liberation Mono" textLength="13.5" lengthAdjust="spacingAndGlyphs">**</text><text x="24.5" y="936" font-size="12" font-weight="normal" fill="#000" font-family="Liberation Sans" textLength="34" lengthAdjust="spacingAndGlyphs">ｼｪｲﾌﾟ</text><text x="67.5" y="936" font-size="12.5" font-weight="normal" fill="#000" font-family="Liberation Mono" textLength="12.5" lengthAdjust="spacingAndGlyphs">49</text><text x="87.5" y="936" font-size="12.5" font-weight="normal" fill="#000" font-family="Liberation Sans" textLength="130" lengthAdjust="spacingAndGlyphs">は定義されていません</text><text x="4" y="955" font-size="19" font-weight="bold" fill="#000" font-family="Liberation Mono" textLength="13.5" lengthAdjust="spacingAndGlyphs">**</text><text x="24.5" y="949" font-size="12" font-weight="normal" fill="#000" font-family="Liberation Sans" textLength="34" lengthAdjust="spacingAndGlyphs">ｼｪｲﾌﾟ</text><text x="67.5" y="949" font-size="12.5" font-weight="normal" fill="#000" font-family="Liberation Mono" textLength="12.5" lengthAdjust="spacingAndGlyphs">48</text><text x="87.5" y="949" font-size="12.5" font-weight="normal" fill="#000" font-family="Liberation Sans" textLength="130" lengthAdjust="spacingAndGlyphs">は定義されていません</text><text x="4.5" y="964" font-size="12.5" font-weight="normal" fill="#000" font-family="Liberation Sans" textLength="40.5" lengthAdjust="spacingAndGlyphs">ｺﾏﾝﾄﾞ:</text><text x="12.5" y="991.5" font-size="17.5" font-weight="normal" fill="#000" font-family="Liberation Sans" textLength="180" lengthAdjust="spacingAndGlyphs">150.4711, 51.7347, 0.0000</text><text x="336" y="991.5" font-size="17.5" font-weight="normal" fill="#000" font-family="Liberation Sans" textLength="36.80000000000001" lengthAdjust="spacingAndGlyphs">ｽﾅｯﾌﾟ</text><text x="378.7" y="991.5" font-size="17.5" font-weight="normal" fill="#000" font-family="Liberation Sans" textLength="45.900000000000034" lengthAdjust="spacingAndGlyphs">ｸﾞﾘｯﾄﾞ</text><text x="429.5" y="991.5" font-size="17.5" font-weight="normal" fill="#000" font-family="Liberation Sans" textLength="62.30000000000001" lengthAdjust="spacingAndGlyphs">直交ﾓｰﾄﾞ</text><text x="496.7" y="991.5" font-size="17.5" font-weight="normal" fill="#000" font-family="Liberation Sans" textLength="16.30000000000001" lengthAdjust="spacingAndGlyphs">極</text><text x="519" y="991.5" font-size="17.5" font-weight="normal" fill="#000" font-family="Liberation Sans" textLength="49.200000000000045" lengthAdjust="spacingAndGlyphs">OSNAP</text><text x="573.8" y="991.5" font-size="17.5" font-weight="normal" fill="#000" font-family="Liberation Sans" textLength="56.700000000000045" lengthAdjust="spacingAndGlyphs">OTRACK</text><text x="637.7" y="991.5" font-size="17.5" font-weight="normal" fill="#000" font-family="Liberation Sans" textLength="24.59999999999991" lengthAdjust="spacingAndGlyphs">LWT</text><text x="668.9" y="991.5" font-size="17.5" font-weight="normal" fill="#000" font-family="Liberation Sans" textLength="32.700000000000045" lengthAdjust="spacingAndGlyphs">ﾓﾃﾞﾙ</text></svg>
</body></html>
